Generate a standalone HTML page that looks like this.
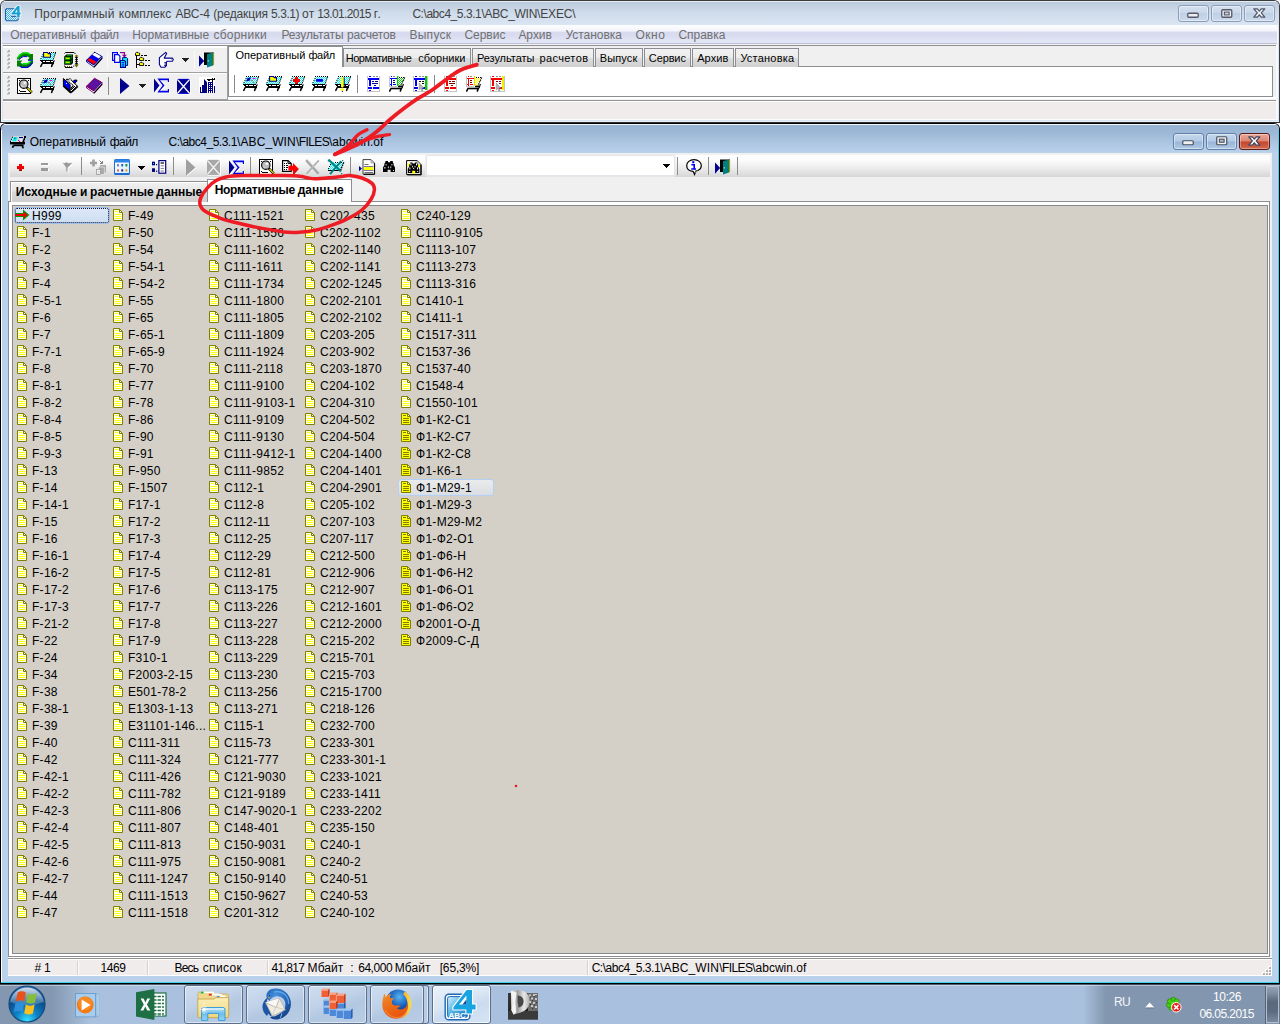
<!DOCTYPE html>
<html lang="ru"><head><meta charset="utf-8"><title>ABC-4</title>
<style>
html,body{margin:0;padding:0;}
body{width:1280px;height:1024px;overflow:hidden;background:#f4f7fb;font-family:"Liberation Sans",sans-serif;}
#root{position:relative;width:1280px;height:1024px;overflow:hidden;}
#root div{position:absolute;box-sizing:border-box;}
.t{position:absolute;white-space:pre;font-family:"Liberation Sans",sans-serif;}
.i{position:absolute;overflow:visible;}
.l{font-size:12px;line-height:16px;color:#000;letter-spacing:0.28px;}

</style></head>
<body>
<div id="root">
<div style="left:0px;top:0px;width:1280px;height:123px;background:#3b3b3b;border-radius:6px 6px 0 0;"></div>
<div style="left:1px;top:1px;width:1278px;height:121px;background:#dbe6f4;border-radius:5px 5px 0 0;"></div>
<div style="left:1px;top:1px;width:1278px;height:24px;background:linear-gradient(#e4ecf6 0,#e4ecf6 1px,#bccbdc 1px,#c0cfe0 4px,#cfdceb 12px,#d7e2f0 20px,#dae5f3 24px);border-radius:5px 5px 0 0;"></div>
<div style="left:1px;top:6px;width:1px;height:116px;background:#f2f6fb;"></div>
<div style="left:3px;top:25px;width:1px;height:95px;background:#fbfcfe;"></div>
<div style="left:1276px;top:25px;width:2px;height:95px;background:#f6f9fd;"></div>
<svg class="i" style="left:5px;top:5px" width="16" height="17" viewBox="0 0 16 17" >
<path d="M1.5 3.8H11.5V12.2H13.2V14.6L11.8 15.8H1.6L0.5 14.6V4.8Z" fill="url(#chkb)" stroke="#2060a8" stroke-width="1.1"/>
<path d="M6 11.2H11.5" stroke="#2060a8" stroke-width="1.4"/>
<path d="M6.4 8.6L12.6 0.8H14.6V7.4H15.6V9.6H14.6V12.4H12.2V9.6H6.4Z" fill="#ffffff" stroke="#ffffff" stroke-width="1.6" stroke-linejoin="round"/>
<path d="M6.4 8.6L12.6 0.8H14.6V7.4H15.6V9.6H14.6V12.4H12.2V9.6H6.4Z M12.2 7.4V4.4L9.8 7.4Z" fill="#14a0d0" fill-rule="evenodd"/>
</svg>
<span id="t1" class="t" style="left:34.2px;top:6px;font-size:12px;line-height:16px;color:#434343;letter-spacing:0.203px;">Программный</span>
<span id="t2" class="t" style="left:118.7px;top:6px;font-size:12px;line-height:16px;color:#434343;letter-spacing:0.116px;">комплекс</span>
<span id="t3" class="t" style="left:175.5px;top:6px;font-size:12px;line-height:16px;color:#434343;letter-spacing:-0.130px;">АВС-4</span>
<span id="t4" class="t" style="left:213.2px;top:6px;font-size:12px;line-height:16px;color:#434343;letter-spacing:-0.165px;">(редакция</span>
<span id="t5" class="t" style="left:271.1px;top:6px;font-size:12px;line-height:16px;color:#434343;letter-spacing:-0.466px;">5.3.1)</span>
<span id="t6" class="t" style="left:302.0px;top:6px;font-size:12px;line-height:16px;color:#434343;letter-spacing:0.244px;">от</span>
<span id="t7" class="t" style="left:317.3px;top:6px;font-size:12px;line-height:16px;color:#434343;letter-spacing:-0.656px;">13.01.2015</span>
<span id="t8" class="t" style="left:373.7px;top:6px;font-size:12px;line-height:16px;color:#434343;letter-spacing:0.875px;">г.</span>
<span id="t9" class="t" style="left:412.4px;top:6px;font-size:12px;line-height:16px;color:#434343;letter-spacing:-0.448px;">C:\abc4_5.3.1</span>
<span id="t10" class="t" style="left:481.4px;top:6px;font-size:12px;line-height:16px;color:#434343;letter-spacing:-0.301px;">\ABC_WIN</span>
<span id="t11" class="t" style="left:537.1px;top:6px;font-size:12px;line-height:16px;color:#434343;letter-spacing:-0.176px;">\EXEC\</span>
<div style="left:1178px;top:5px;width:31px;height:17px;border:1px solid #8d9cbb;border-radius:3px;background:linear-gradient(#d3dfee,#c9d8ea 50%,#bfd0e5 50%,#cbdaec);box-shadow:inset 0 0 0 1px rgba(255,255,255,.45);"></div>
<svg class="i" style="left:1187px;top:12px" width="13" height="6" viewBox="0 0 13 6" ><rect x="0.75" y="1.25" width="10.5" height="4" rx="1" fill="#eceef2" stroke="#55596a" stroke-width="1.3"/></svg>
<div style="left:1211px;top:5px;width:31px;height:17px;border:1px solid #8d9cbb;border-radius:3px;background:linear-gradient(#d3dfee,#c9d8ea 50%,#bfd0e5 50%,#cbdaec);box-shadow:inset 0 0 0 1px rgba(255,255,255,.45);"></div>
<svg class="i" style="left:1221px;top:9px" width="12" height="9" viewBox="0 0 12 9" ><rect x="0.75" y="0.75" width="10" height="7.5" rx="1" fill="#eceef2" stroke="#55596a" stroke-width="1.3"/><rect x="3.4" y="3.1" width="4.7" height="2.8" fill="#cfd8e6" stroke="#55596a" stroke-width="1.1"/></svg>
<div style="left:1244px;top:5px;width:31px;height:17px;border:1px solid #8d9cbb;border-radius:3px;background:linear-gradient(#d3dfee,#c9d8ea 50%,#bfd0e5 50%,#cbdaec);box-shadow:inset 0 0 0 1px rgba(255,255,255,.45);"></div>
<svg class="i" style="left:1253px;top:8px" width="13" height="11" viewBox="0 0 13 11" ><path d="M0.8 0.8H4.4L6.3 3.1L8.2 0.8H11.8L8.3 4.9L11.8 9.2H8.2L6.3 6.8L4.4 9.2H0.8L4.3 4.9Z" fill="#f0f1f4" stroke="#50556a" stroke-width="1.2" stroke-linejoin="round"/></svg>
<div style="left:2px;top:25px;width:1275px;height:18px;background:linear-gradient(#fdfdfe 0,#f3f5fb 6px,#d9dcef 7px,#d8dbef 10px,#e3e7f6 18px);"></div>
<div style="left:2px;top:43px;width:1275px;height:1px;background:#b9bed2;"></div>
<div style="left:2px;top:44px;width:1275px;height:1px;background:#f4f5f9;"></div>
<span id="t12" class="t" style="left:10.3px;top:27px;font-size:12px;line-height:16px;color:#707070;letter-spacing:-0.011px;">Оперативный</span>
<span id="t13" class="t" style="left:90.3px;top:27px;font-size:12px;line-height:16px;color:#707070;letter-spacing:-0.539px;">файл</span>
<span id="t14" class="t" style="left:132.2px;top:27px;font-size:12px;line-height:16px;color:#707070;letter-spacing:-0.021px;">Нормативные</span>
<span id="t15" class="t" style="left:213.4px;top:27px;font-size:12px;line-height:16px;color:#707070;letter-spacing:0.248px;">сборники</span>
<span id="t16" class="t" style="left:281.5px;top:27px;font-size:12px;line-height:16px;color:#707070;letter-spacing:-0.131px;">Результаты</span>
<span id="t17" class="t" style="left:347.1px;top:27px;font-size:12px;line-height:16px;color:#707070;letter-spacing:-0.207px;">расчетов</span>
<span id="t18" class="t" style="left:409.4px;top:27px;font-size:12px;line-height:16px;color:#707070;letter-spacing:0.292px;">Выпуск</span>
<span id="t19" class="t" style="left:464.4px;top:27px;font-size:12px;line-height:16px;color:#707070;letter-spacing:-0.016px;">Сервис</span>
<span id="t20" class="t" style="left:518.4px;top:27px;font-size:12px;line-height:16px;color:#707070;letter-spacing:-0.025px;">Архив</span>
<span id="t21" class="t" style="left:565.4px;top:27px;font-size:12px;line-height:16px;color:#707070;letter-spacing:-0.026px;">Установка</span>
<span id="t22" class="t" style="left:635.4px;top:27px;font-size:12px;line-height:16px;color:#707070;letter-spacing:0.527px;">Окно</span>
<span id="t23" class="t" style="left:678.4px;top:27px;font-size:12px;line-height:16px;color:#707070;letter-spacing:-0.011px;">Справка</span>
<div style="left:3px;top:45px;width:1273px;height:1px;background:#8f8f8f;"></div>
<div style="left:3px;top:46px;width:1273px;height:54px;background:#f0f0f0;"></div>
<div style="left:3px;top:46px;width:225px;height:1px;background:#ffffff;"></div>
<div style="left:3px;top:47px;width:225px;height:1px;background:#ffffff;"></div>
<div style="left:3px;top:72px;width:225px;height:1px;background:#a0a0a0;"></div>
<div style="left:3px;top:73px;width:225px;height:1px;background:#ffffff;"></div>
<div style="left:227px;top:46px;width:1px;height:53px;background:#a0a0a0;"></div>
<div style="left:228px;top:97px;width:1048px;height:2px;background:#ffffff;"></div>
<div style="left:3px;top:99px;width:225px;height:1px;background:#a0a0a0;"></div>
<div style="left:228px;top:99px;width:1048px;height:1px;background:#f2f2f2;"></div>
<div style="left:3px;top:100px;width:1273px;height:1px;background:#969696;"></div>
<div style="left:3px;top:101px;width:1273px;height:1px;background:#ffffff;"></div>
<div style="left:3px;top:102px;width:1273px;height:17px;background:#f1ecec;"></div>
<div style="left:3px;top:119px;width:1273px;height:1px;background:#fbfcfe;"></div>
<div style="left:1px;top:121px;width:1278px;height:1px;background:#e8eff8;"></div>
<div style="left:0px;top:122px;width:1280px;height:1px;background:#2f2f2f;"></div>
<div style="left:7px;top:51px;width:2px;height:2px;background:#c8c8c8;"></div>
<div style="left:8px;top:50px;width:2px;height:2px;background:#b4b4b4;"></div>
<div style="left:7px;top:55px;width:2px;height:2px;background:#c8c8c8;"></div>
<div style="left:8px;top:54px;width:2px;height:2px;background:#b4b4b4;"></div>
<div style="left:7px;top:59px;width:2px;height:2px;background:#c8c8c8;"></div>
<div style="left:8px;top:58px;width:2px;height:2px;background:#b4b4b4;"></div>
<div style="left:7px;top:63px;width:2px;height:2px;background:#c8c8c8;"></div>
<div style="left:8px;top:62px;width:2px;height:2px;background:#b4b4b4;"></div>
<div style="left:7px;top:67px;width:2px;height:2px;background:#c8c8c8;"></div>
<div style="left:8px;top:66px;width:2px;height:2px;background:#b4b4b4;"></div>
<div style="left:7px;top:77px;width:2px;height:2px;background:#c8c8c8;"></div>
<div style="left:8px;top:76px;width:2px;height:2px;background:#b4b4b4;"></div>
<div style="left:7px;top:81px;width:2px;height:2px;background:#c8c8c8;"></div>
<div style="left:8px;top:80px;width:2px;height:2px;background:#b4b4b4;"></div>
<div style="left:7px;top:85px;width:2px;height:2px;background:#c8c8c8;"></div>
<div style="left:8px;top:84px;width:2px;height:2px;background:#b4b4b4;"></div>
<div style="left:7px;top:89px;width:2px;height:2px;background:#c8c8c8;"></div>
<div style="left:8px;top:88px;width:2px;height:2px;background:#b4b4b4;"></div>
<div style="left:7px;top:93px;width:2px;height:2px;background:#c8c8c8;"></div>
<div style="left:8px;top:92px;width:2px;height:2px;background:#b4b4b4;"></div>
<div style="left:228px;top:66px;width:1045px;height:31px;background:#fff;border:1px solid #8c8e94;"></div>
<div style="left:343px;top:48px;width:128px;height:19px;border:1px solid #8c8e94;border-bottom:none;background:linear-gradient(#f2f2f2,#ebebeb 50%,#dddddd 50%,#d0d0d0);"></div>
<span id="t24" class="t" style="left:345.7px;top:51px;font-size:11px;line-height:15px;color:#000;letter-spacing:-0.459px;">Нормативные</span>
<span id="t25" class="t" style="left:418.2px;top:51px;font-size:11px;line-height:15px;color:#000;letter-spacing:-0.002px;">сборники</span>
<div style="left:472px;top:48px;width:122px;height:19px;border:1px solid #8c8e94;border-bottom:none;background:linear-gradient(#f2f2f2,#ebebeb 50%,#dddddd 50%,#d0d0d0);"></div>
<span id="t26" class="t" style="left:476.9px;top:51px;font-size:11px;line-height:15px;color:#000;letter-spacing:-0.044px;">Результаты</span>
<span id="t27" class="t" style="left:539.4px;top:51px;font-size:11px;line-height:15px;color:#000;letter-spacing:0.377px;">расчетов</span>
<div style="left:595px;top:48px;width:48px;height:19px;border:1px solid #8c8e94;border-bottom:none;background:linear-gradient(#f2f2f2,#ebebeb 50%,#dddddd 50%,#d0d0d0);"></div>
<span id="t28" class="t" style="left:599.7px;top:51px;font-size:11px;line-height:15px;color:#000;letter-spacing:0.134px;">Выпуск</span>
<div style="left:644px;top:48px;width:47px;height:19px;border:1px solid #8c8e94;border-bottom:none;background:linear-gradient(#f2f2f2,#ebebeb 50%,#dddddd 50%,#d0d0d0);"></div>
<span id="t29" class="t" style="left:648.8px;top:51px;font-size:11px;line-height:15px;color:#000;letter-spacing:-0.112px;">Сервис</span>
<div style="left:692px;top:48px;width:42px;height:19px;border:1px solid #8c8e94;border-bottom:none;background:linear-gradient(#f2f2f2,#ebebeb 50%,#dddddd 50%,#d0d0d0);"></div>
<span id="t30" class="t" style="left:697.2px;top:51px;font-size:11px;line-height:15px;color:#000;letter-spacing:0.073px;">Архив</span>
<div style="left:735px;top:48px;width:64px;height:19px;border:1px solid #8c8e94;border-bottom:none;background:linear-gradient(#f2f2f2,#ebebeb 50%,#dddddd 50%,#d0d0d0);"></div>
<span id="t31" class="t" style="left:740.4px;top:51px;font-size:11px;line-height:15px;color:#000;letter-spacing:0.222px;">Установка</span>
<div style="left:228px;top:46px;width:115px;height:21px;border:1px solid #8c8e94;border-bottom:none;background:#fff;"></div>
<span id="t32" class="t" style="left:235.4px;top:48px;font-size:11px;line-height:15px;color:#000;letter-spacing:0.020px;">Оперативный</span>
<span id="t33" class="t" style="left:308.4px;top:48px;font-size:11px;line-height:15px;color:#000;letter-spacing:-0.336px;">файл</span>
<svg class="i" width="0" height="0" style="left:0;top:0"><defs>
<pattern id="chk" width="2" height="2" patternUnits="userSpaceOnUse"><rect width="2" height="2" fill="#00ffff"/><rect width="1" height="1" fill="#fff"/><rect x="1" y="1" width="1" height="1" fill="#fff"/></pattern>
<pattern id="chkg" width="2" height="2" patternUnits="userSpaceOnUse"><rect width="2" height="2" fill="#00e000"/><rect width="1" height="1" fill="#fff"/><rect x="1" y="1" width="1" height="1" fill="#fff"/></pattern>
<pattern id="chky" width="2" height="2" patternUnits="userSpaceOnUse"><rect width="2" height="2" fill="#ffff00"/><rect width="1" height="1" fill="#fff"/><rect x="1" y="1" width="1" height="1" fill="#fff"/></pattern>
<pattern id="chkk" width="2" height="2" patternUnits="userSpaceOnUse"><rect width="2" height="2" fill="#000"/><rect width="1" height="1" fill="#fff"/><rect x="1" y="1" width="1" height="1" fill="#fff"/></pattern>
<pattern id="chkb" width="2" height="2" patternUnits="userSpaceOnUse"><rect width="2" height="2" fill="#38b0f0"/><rect width="1" height="1" fill="#e8f6ff"/><rect x="1" y="1" width="1" height="1" fill="#e8f6ff"/></pattern>
</defs></svg>
<svg class="i" style="left:17px;top:52px" width="16" height="16" viewBox="0 0 16 16" >
<path d="M0 7.5V5.5L2.5 2.5L5.5 0.5H11L13 2H16V8H10.5L12.5 6L10.5 4.2H6L3.5 5.8L2 7.5Z" fill="#008000"/>
<path d="M0.4 6.2L2.9 3L5.7 1.1H11L13.2 2.5" stroke="#00e800" stroke-width="1.3" fill="none"/>
<path d="M2 7.6L4 5.8L6.2 4.6H10.4" stroke="#0000e0" stroke-width="1" fill="none"/>
<path d="M11 8.3H16" stroke="#0000e0" stroke-width="1"/>
<g transform="rotate(180 8 8.25)">
<path d="M0 7.5V5.5L2.5 2.5L5.5 0.5H11L13 2H16V8H10.5L12.5 6L10.5 4.2H6L3.5 5.8L2 7.5Z" fill="#008000"/>
<path d="M0.4 6.2L2.9 3L5.7 1.1H11L13.2 2.5" stroke="#0000e0" stroke-width="1.2" fill="none"/>
<path d="M2.4 7.4L4.2 5.6L6.2 4.8H10.4" stroke="#00e800" stroke-width="1.2" fill="none"/>
</g>
</svg>
<svg class="i" style="left:40px;top:52px" width="16" height="16" viewBox="0 0 16 16" ><path d="M3.5 1H16L12.6 8H0Z" fill="url(#chk)"/><path d="M3 0.5H16" stroke="#000" stroke-width="1" stroke-dasharray="1 1"/><path d="M2.5 2.5h1M1.5 4.5h1M0.5 6.5h1" stroke="#000" stroke-width="1"/><path d="M15.6 0.6L12.9 8.2" stroke="#000" stroke-width="1.1" stroke-dasharray="1.2 0.8"/><path d="M14.4 8.4L12.6 13" stroke="#000" stroke-width="1.1" stroke-dasharray="1.2 0.8"/><g shape-rendering="crispEdges"><rect x="0" y="8" width="13" height="1" fill="#000"/><rect x="1" y="9" width="13" height="1" fill="#000"/><rect x="3" y="9" width="2" height="1" fill="#fff"/><rect x="6" y="9" width="4" height="1" fill="#fff"/><rect x="11" y="9" width="2" height="1" fill="#fff"/><rect x="2" y="10" width="12" height="2" fill="#000"/></g><path d="M2.2 11.5L0.8 14.4M12.6 11.5L11.6 14.4" stroke="#000" stroke-width="1.5" stroke-linecap="round"/><path d="M4 0.5H7.5L8.3 1.6H10.5V5.3H3.6V0.5Z" fill="#ffff00" stroke="#000090" stroke-width="1.1" stroke-linejoin="round"/></svg>
<svg class="i" style="left:64px;top:52px" width="16" height="16" viewBox="0 0 16 16" >
<path d="M0.5 1.5L1.5 0.5H10L11.5 2" stroke="#000" fill="none" stroke-width="1"/>
<path d="M2.4 2.4H9V11L7.4 12.8H0.2V4.6Z" fill="#000"/>
<path d="M2.6 3.5H7.8V7.4M7.8 8.4V10.6" stroke="#009000" stroke-width="1" fill="none"/>
<rect x="1" y="4.8" width="5.4" height="3" fill="#00a800"/><rect x="1.8" y="5.8" width="3.8" height="1" fill="#ffff00"/>
<rect x="1" y="8.8" width="5.4" height="3" fill="#00a800"/><rect x="1.8" y="9.8" width="3.8" height="1" fill="#ffff00"/>
<path d="M1 14.5H9" stroke="#707000" stroke-width="1" stroke-dasharray="1 1"/><path d="M1 15.5H8.5" stroke="#000" stroke-width="1"/>
<rect x="0" y="13.6" width="1" height="1" fill="#000"/><rect x="9.2" y="13.6" width="1" height="1" fill="#000"/>
<path d="M12.5 3.5V14" stroke="#000" stroke-width="1.2"/>
<path d="M11.2 5.5H13.8M11.2 7.5H13.8M11.2 9.5H13.8M11.2 11.5H13.8" stroke="#000" stroke-width="0.9"/>
<path d="M10.4 4.2L12.5 2.4L14.6 4.2L12.5 4.8Z" fill="#808000"/><path d="M10.4 12.4L12.5 12L14.6 12.4L12.5 15.4Z" fill="#606000"/>
</svg>
<svg class="i" style="left:86px;top:52px" width="17" height="16" viewBox="0 0 17 16" >
<path d="M0.5 8.2V9.8L7.8 14.9L16 6V4.4L7.8 12.8Z" fill="#fff" stroke="#000090" stroke-width="0.9"/>
<path d="M7.9 15.3L16.3 6.2" stroke="#000" stroke-width="1.1"/>
<path d="M0.5 8.2L8.5 0.3L15.6 4.2L7.8 12.8Z" fill="#0000f0" stroke="#000090" stroke-width="0.9"/>
<path d="M6.2 2.8L8.5 0.6L15 4.2L12.8 6.6Z" fill="#fff"/>
<path d="M1.2 8.2L3.6 5.9L10.2 9.8L7.8 12.3Z" fill="#ff0000"/>
<rect x="8" y="0" width="1" height="1" fill="#000"/>
</svg>
<svg class="i" style="left:112px;top:52px" width="16" height="16" viewBox="0 0 16 16" >
<rect x="0.6" y="0.6" width="4.8" height="7.8" fill="#fff" stroke="#0000f0" stroke-width="1.2"/>
<path d="M2.6 2.6H6.4L7.9 4.2V10.4H2.6Z" fill="#fff" stroke="#0000f0" stroke-width="1.2"/>
<path d="M8 0.6H13" stroke="#900090" stroke-width="1.2"/><path d="M12.4 0.6V4" stroke="#900090" stroke-width="1.2"/><path d="M9.8 2.8H15L12.4 5.4Z" fill="#900090"/>
<path d="M10.6 5.6H14.6L15.6 6.6V13.4H10.6Z" fill="#00f0f0" stroke="#000090" stroke-width="1"/>
<path d="M8.5 8.5H12.4L13.5 9.6V15.4H8.5Z" fill="#00f0f0" stroke="#000090" stroke-width="1.1"/>
<path d="M9.8 10.5H12.2M9.8 12.2H12.2M9.8 13.9H12.2" stroke="#0000e0" stroke-width="0.9"/>
</svg>
<svg class="i" style="left:135px;top:52px" width="16" height="16" viewBox="0 0 16 16" >
<g shape-rendering="crispEdges">
<rect x="1" y="3" width="1" height="13" fill="#000"/>
<rect x="2" y="7" width="3" height="1" fill="#000"/><rect x="2" y="12" width="3" height="1" fill="#000"/>
<rect x="6" y="3" width="2" height="1" fill="#000"/><rect x="9" y="3" width="3" height="1" fill="#000"/>
<rect x="10" y="8" width="2" height="1" fill="#000"/><rect x="13" y="8" width="2" height="1" fill="#000"/>
<rect x="10" y="13" width="2" height="1" fill="#000"/><rect x="13" y="13" width="2" height="1" fill="#000"/>
</g>
<path d="M0.5 3.5V1.2L1.5 0.4H3L3.8 1.2H4.6V3.5Z" fill="#ffff00" stroke="#000" stroke-width="0.9"/>
<path d="M4.5 8.5V6.2L5.5 5.4H7L7.8 6.2H8.6V8.5Z" fill="#ffff00" stroke="#000" stroke-width="0.9"/>
<path d="M4.5 13.5V11.2L5.5 10.4H7L7.8 11.2H8.6V13.5Z" fill="#ffff00" stroke="#000" stroke-width="0.9"/>
</svg>
<svg class="i" style="left:158px;top:52px" width="16" height="16" viewBox="0 0 16 16" >
<path d="M7.7 0.4L1.4 5.6V12.4L3 15.2H7L8.4 13.6V10.2L9 9.2H14.4L15.3 7.6L14.4 6.1H6.2L8.7 1.5Z" fill="#fff" stroke="#000090" stroke-width="1.1" stroke-linejoin="round"/>
<path d="M6.4 10.5H8.4M6.4 12H8.4M6.2 13.5H8" stroke="#000090" stroke-width="0.9"/>
<rect x="13" y="7" width="1.4" height="1.4" fill="#b0b0b0"/>
</svg>
<svg class="i" style="left:182px;top:58px" width="7" height="4" viewBox="0 0 7 4" ><g shape-rendering="crispEdges" fill="#202020"><rect x="0" y="0" width="7" height="1"/><rect x="1" y="1" width="5" height="1"/><rect x="2" y="2" width="3" height="1"/><rect x="3" y="3" width="1" height="1"/></g></svg>
<div style="left:194px;top:51px;width:1px;height:18px;background:#fafafa;"></div>
<div style="left:107px;top:51px;width:1px;height:18px;background:#fafafa;"></div>
<svg class="i" style="left:199px;top:52px" width="17" height="16" viewBox="0 0 17 16" ><path d="M0 3.6L5.2 9L0 14.4Z" fill="#000090"/><path d="M0 12.6V14.4L1.8 12.6Z" fill="#0000f0"/>
<path d="M5 0.5H15V13H5Z" fill="#000"/>
<path d="M8 2.2L14.2 0.6V13.4L8 15.4Z" fill="#008080"/>
<path d="M14.6 1V13" stroke="#c0a000" stroke-width="1"/>
<rect x="8.8" y="8" width="0.9" height="1.6" fill="#c0e0e0"/></svg>
<svg class="i" style="left:17px;top:78px" width="16" height="16" viewBox="0 0 16 16" ><rect x="0.5" y="0.5" width="13" height="15" fill="#fff" stroke="#000" stroke-width="1"/>
<path d="M3 13.5H9" stroke="#000" stroke-width="1"/><rect x="2" y="2" width="1" height="1" fill="#000"/><rect x="11" y="2" width="1" height="1" fill="#000"/><rect x="2" y="12" width="1" height="1" fill="#000"/>
<circle cx="6.8" cy="6.2" r="4.2" fill="#bcbcbc" stroke="#000" stroke-width="1.1"/>
<circle cx="7.8" cy="4.8" r="1.4" fill="#f6f6f6"/><path d="M4.4 7L6.2 8.8" stroke="#e8e8e8" stroke-width="0.9"/>
<path d="M9.8 9.4L14.8 14.6" stroke="#000" stroke-width="2.4"/><path d="M10.6 10L14.7 14.3" stroke="#f4e800" stroke-width="1.1"/></svg>
<svg class="i" style="left:40px;top:78px" width="16" height="16" viewBox="0 0 16 16" ><path d="M3.5 1H16L12.6 8H0Z" fill="url(#chk)"/><path d="M3 0.5H16" stroke="#000" stroke-width="1" stroke-dasharray="1 1"/><path d="M2.5 2.5h1M1.5 4.5h1M0.5 6.5h1" stroke="#000" stroke-width="1"/><path d="M15.6 0.6L12.9 8.2" stroke="#000" stroke-width="1.1" stroke-dasharray="1.2 0.8"/><path d="M14.4 8.4L12.6 13" stroke="#000" stroke-width="1.1" stroke-dasharray="1.2 0.8"/><g shape-rendering="crispEdges"><rect x="0" y="8" width="13" height="1" fill="#000"/><rect x="1" y="9" width="13" height="1" fill="#000"/><rect x="3" y="9" width="2" height="1" fill="#fff"/><rect x="6" y="9" width="4" height="1" fill="#fff"/><rect x="11" y="9" width="2" height="1" fill="#fff"/><rect x="2" y="10" width="12" height="2" fill="#000"/></g><path d="M2.2 11.5L0.8 14.4M12.6 11.5L11.6 14.4" stroke="#000" stroke-width="1.5" stroke-linecap="round"/><path d="M4.5 2L8 1.2L7 4.6L3 5.6Z" fill="#0000b0"/><path d="M9.5 2.5H12.5" stroke="#ff00ff" stroke-width="1"/><path d="M8.5 4L11.5 7.5" stroke="#f00000" stroke-width="1" stroke-dasharray="1.4 0.8"/></svg>
<svg class="i" style="left:63px;top:78px" width="16" height="16" viewBox="0 0 16 16" >
<path d="M3.2 1.3H5.5L6.5 0.3L14.9 8.5L8.1 14.8L7.1 13.1V6.6Z" fill="#fff"/>
<path d="M10.5 7.7L14.9 8.5L8.1 14.8V10Z" fill="url(#chkk)"/>
<path d="M3.2 1.3L10.5 7.7M6.5 0.3L14.9 8.5" stroke="#000" stroke-width="1.1" stroke-dasharray="1.3 0.6"/>
<path d="M3.2 1.3H5.6L6.4 2.2" stroke="#000" stroke-width="1" fill="none"/>
<path d="M10.5 7.7L8.1 10V12" stroke="#000" stroke-width="1.1" fill="none"/>
<path d="M14.9 8.5L8.1 14.8" stroke="#000" stroke-width="1.2"/>
<path d="M0.4 0.5L7.1 6.6V13.1L0.4 7.5Z" fill="#0000ff" stroke="#000" stroke-width="1"/>
<path d="M0.4 7.7L8 14.8" stroke="#000" stroke-width="1.9"/>
<path d="M10 3.5L11.3 2.1H13.8V3.3L11.4 5.4Z" fill="#0000ff" stroke="#000" stroke-width="1"/>
<rect x="3" y="5" width="1" height="1" fill="#fff"/>
</svg>
<svg class="i" style="left:86px;top:78px" width="17" height="16" viewBox="0 0 17 16" >
<path d="M0.5 8.2V9.8L7.8 14.9L16 6V4.4L7.8 12.8Z" fill="#fff" stroke="#700070" stroke-width="0.9"/>
<path d="M7.9 15.3L16.3 6.2" stroke="#000" stroke-width="1.1"/>
<path d="M0.5 8.2L8.5 0.3L15.6 4.2L7.8 12.8Z" fill="#800080" stroke="#600060" stroke-width="0.9"/>
<path d="M3.4 8.2L9.6 1.9M5.8 9.6L12 3.2M8.2 11L14.2 4.6" stroke="#2828d0" stroke-width="1.1"/>
</svg>
<div style="left:108px;top:77px;width:1px;height:18px;background:#8a8a8a;"></div>
<svg class="i" style="left:120px;top:78px" width="10" height="16" viewBox="0 0 10 16" ><path d="M0 0L9.5 8L0 16Z" fill="#000090"/></svg>
<svg class="i" style="left:139px;top:84px" width="7" height="4" viewBox="0 0 7 4" ><g shape-rendering="crispEdges" fill="#202020"><rect x="0" y="0" width="7" height="1"/><rect x="1" y="1" width="5" height="1"/><rect x="2" y="2" width="3" height="1"/><rect x="3" y="3" width="1" height="1"/></g></svg>
<svg class="i" style="left:154px;top:78px" width="16" height="16" viewBox="0 0 16 16" ><path d="M1 1.5L6.5 8.4L1 15.4Z" fill="#fff"/><path d="M4.4 1.4H16V4.8H14.8V3H7L11.6 8.2L6.8 13.6H14.8V11.8H16V15.4H4.4L9.6 8.3Z" fill="#fff"/><path d="M0 0.5L5.5 7.5L0 14.5Z" fill="#000090"/><path d="M3.4 0.6H15V4H13.8V2.2H6L10.6 7.4L5.8 12.8H13.8V11H15V14.6H3.4L8.6 7.5Z" fill="#0000e8"/></svg>
<svg class="i" style="left:177px;top:78px" width="14" height="17" viewBox="0 0 14 17" ><rect x="1" y="2" width="13" height="14.6" fill="#fff"/><path d="M1 1H12L13 2.2V14.6L12 15.8H1L0 14.6V2.2Z" fill="#000090"/><path d="M0.6 1.6L12.4 15.2M12.4 1.6L0.6 15.2" stroke="#fff" stroke-width="1.3"/><path d="M1.2 1.3H11.8M1.2 15.5H11.8" stroke="#0000e0" stroke-width="0.7"/></svg>
<svg class="i" style="left:199px;top:77px" width="17" height="17" viewBox="0 0 17 17" >
<g shape-rendering="crispEdges"><rect x="0" y="0" width="16" height="16" fill="#fff"/>
<rect x="1" y="10" width="1" height="6" fill="#000080"/><rect x="1" y="15" width="3" height="1" fill="#000080"/>
<rect x="3" y="8" width="2" height="8" fill="#000080"/>
<rect x="5" y="11" width="3" height="5" fill="#000080"/><rect x="6" y="7" width="2" height="4" fill="#000080"/>
<rect x="9" y="5" width="5" height="11" fill="#000080"/>
<rect x="10" y="6" width="1" height="1" fill="#fff"/><rect x="12" y="6" width="1" height="1" fill="#fff"/>
<rect x="10" y="8" width="1" height="1" fill="#fff"/><rect x="12" y="8" width="1" height="1" fill="#fff"/>
<rect x="10" y="10" width="1" height="1" fill="#fff"/><rect x="12" y="10" width="1" height="1" fill="#fff"/>
<rect x="10" y="12" width="1" height="1" fill="#fff"/><rect x="12" y="12" width="1" height="1" fill="#fff"/>
<rect x="10" y="14" width="1" height="1" fill="#fff"/><rect x="12" y="14" width="1" height="1" fill="#fff"/>
<rect x="10" y="15" width="1" height="1" fill="#fff"/><rect x="12" y="15" width="1" height="1" fill="#fff"/>
<rect x="15" y="9" width="1" height="7" fill="#000080"/>
<rect x="8" y="2" width="8" height="1" fill="#000"/><rect x="9" y="3" width="2" height="1" fill="#000"/><rect x="13" y="1" width="1" height="4" fill="#000"/><rect x="15" y="1" width="1" height="1" fill="#000"/></g>
<path d="M5 2L8 5.2V11H5Z" fill="#000080"/>
</svg>
<div style="left:234px;top:75px;width:1px;height:18px;background:#8a8a8a;"></div>
<svg class="i" style="left:243px;top:76px" width="16" height="16" viewBox="0 0 16 16" ><path d="M3.5 1H16L12.6 8H0Z" fill="url(#chk)"/><path d="M3 0.5H16" stroke="#000" stroke-width="1" stroke-dasharray="1 1"/><path d="M2.5 2.5h1M1.5 4.5h1M0.5 6.5h1" stroke="#000" stroke-width="1"/><path d="M15.6 0.6L12.9 8.2" stroke="#000" stroke-width="1.1" stroke-dasharray="1.2 0.8"/><path d="M14.4 8.4L12.6 13" stroke="#000" stroke-width="1.1" stroke-dasharray="1.2 0.8"/><g shape-rendering="crispEdges"><rect x="0" y="8" width="13" height="1" fill="#000"/><rect x="1" y="9" width="13" height="1" fill="#000"/><rect x="3" y="9" width="2" height="1" fill="#fff"/><rect x="6" y="9" width="4" height="1" fill="#fff"/><rect x="11" y="9" width="2" height="1" fill="#fff"/><rect x="2" y="10" width="12" height="2" fill="#000"/></g><path d="M2.2 11.5L0.8 14.4M12.6 11.5L11.6 14.4" stroke="#000" stroke-width="1.5" stroke-linecap="round"/><path d="M4.5 2L8 1.2L7 4.6L3 5.6Z" fill="#0000b0"/><path d="M9.5 2.5H12.5" stroke="#ff00ff" stroke-width="1"/><path d="M8.5 4L11.5 7.5" stroke="#f00000" stroke-width="1" stroke-dasharray="1.4 0.8"/></svg>
<svg class="i" style="left:266px;top:76px" width="16" height="16" viewBox="0 0 16 16" ><path d="M3.5 1H16L12.6 8H0Z" fill="url(#chk)"/><path d="M3 0.5H16" stroke="#000" stroke-width="1" stroke-dasharray="1 1"/><path d="M2.5 2.5h1M1.5 4.5h1M0.5 6.5h1" stroke="#000" stroke-width="1"/><path d="M15.6 0.6L12.9 8.2" stroke="#000" stroke-width="1.1" stroke-dasharray="1.2 0.8"/><path d="M14.4 8.4L12.6 13" stroke="#000" stroke-width="1.1" stroke-dasharray="1.2 0.8"/><g shape-rendering="crispEdges"><rect x="0" y="8" width="13" height="1" fill="#000"/><rect x="1" y="9" width="13" height="1" fill="#000"/><rect x="3" y="9" width="2" height="1" fill="#fff"/><rect x="6" y="9" width="4" height="1" fill="#fff"/><rect x="11" y="9" width="2" height="1" fill="#fff"/><rect x="2" y="10" width="12" height="2" fill="#000"/></g><path d="M2.2 11.5L0.8 14.4M12.6 11.5L11.6 14.4" stroke="#000" stroke-width="1.5" stroke-linecap="round"/><path d="M4 0.5H7.5L8.3 1.6H10.5V5.3H3.6V0.5Z" fill="#ffff00" stroke="#000090" stroke-width="1.1" stroke-linejoin="round"/></svg>
<svg class="i" style="left:289px;top:76px" width="16" height="16" viewBox="0 0 16 16" ><path d="M3.5 1H16L12.6 8H0Z" fill="url(#chk)"/><path d="M3 0.5H16" stroke="#000" stroke-width="1" stroke-dasharray="1 1"/><path d="M2.5 2.5h1M1.5 4.5h1M0.5 6.5h1" stroke="#000" stroke-width="1"/><path d="M15.6 0.6L12.9 8.2" stroke="#000" stroke-width="1.1" stroke-dasharray="1.2 0.8"/><path d="M14.4 8.4L12.6 13" stroke="#000" stroke-width="1.1" stroke-dasharray="1.2 0.8"/><g shape-rendering="crispEdges"><rect x="0" y="8" width="13" height="1" fill="#000"/><rect x="1" y="9" width="13" height="1" fill="#000"/><rect x="3" y="9" width="2" height="1" fill="#fff"/><rect x="6" y="9" width="4" height="1" fill="#fff"/><rect x="11" y="9" width="2" height="1" fill="#fff"/><rect x="2" y="10" width="12" height="2" fill="#000"/></g><path d="M2.2 11.5L0.8 14.4M12.6 11.5L11.6 14.4" stroke="#000" stroke-width="1.5" stroke-linecap="round"/><g shape-rendering="crispEdges"><rect x="6" y="1" width="3" height="7" fill="#ff0000"/><rect x="4" y="3" width="7" height="3" fill="#ff0000"/><rect x="6" y="7" width="3" height="1" fill="#c00000"/></g></svg>
<svg class="i" style="left:312px;top:76px" width="16" height="16" viewBox="0 0 16 16" ><path d="M3.5 1H16L12.6 8H0Z" fill="url(#chk)"/><path d="M3 0.5H16" stroke="#000" stroke-width="1" stroke-dasharray="1 1"/><path d="M2.5 2.5h1M1.5 4.5h1M0.5 6.5h1" stroke="#000" stroke-width="1"/><path d="M15.6 0.6L12.9 8.2" stroke="#000" stroke-width="1.1" stroke-dasharray="1.2 0.8"/><path d="M14.4 8.4L12.6 13" stroke="#000" stroke-width="1.1" stroke-dasharray="1.2 0.8"/><g shape-rendering="crispEdges"><rect x="0" y="8" width="13" height="1" fill="#000"/><rect x="1" y="9" width="13" height="1" fill="#000"/><rect x="3" y="9" width="2" height="1" fill="#fff"/><rect x="6" y="9" width="4" height="1" fill="#fff"/><rect x="11" y="9" width="2" height="1" fill="#fff"/><rect x="2" y="10" width="12" height="2" fill="#000"/></g><path d="M2.2 11.5L0.8 14.4M12.6 11.5L11.6 14.4" stroke="#000" stroke-width="1.5" stroke-linecap="round"/><rect x="4" y="3" width="7" height="2.7" rx="0.6" fill="#0000ff"/></svg>
<svg class="i" style="left:335px;top:76px" width="16" height="16" viewBox="0 0 16 16" ><path d="M3.5 1H16L12.6 8H0Z" fill="url(#chk)"/><path d="M3 0.5H16" stroke="#000" stroke-width="1" stroke-dasharray="1 1"/><path d="M2.5 2.5h1M1.5 4.5h1M0.5 6.5h1" stroke="#000" stroke-width="1"/><path d="M15.6 0.6L12.9 8.2" stroke="#000" stroke-width="1.1" stroke-dasharray="1.2 0.8"/><path d="M14.4 8.4L12.6 13" stroke="#000" stroke-width="1.1" stroke-dasharray="1.2 0.8"/><g shape-rendering="crispEdges"><rect x="0" y="8" width="13" height="1" fill="#000"/><rect x="1" y="9" width="13" height="1" fill="#000"/><rect x="3" y="9" width="2" height="1" fill="#fff"/><rect x="6" y="9" width="4" height="1" fill="#fff"/><rect x="11" y="9" width="2" height="1" fill="#fff"/><rect x="2" y="10" width="12" height="2" fill="#000"/></g><path d="M2.2 11.5L0.8 14.4M12.6 11.5L11.6 14.4" stroke="#000" stroke-width="1.5" stroke-linecap="round"/><rect x="8.4" y="1.4" width="1.3" height="9.4" fill="#000090"/><rect x="6" y="1" width="2.6" height="10.4" rx="0.8" fill="#ffff00"/><path d="M7.3 11.8L9.4 13.8L7.3 15.4L5.2 13.8Z" fill="#ffff00"/><rect x="6.9" y="15" width="1" height="1" fill="#000090"/></svg>
<div style="left:357px;top:75px;width:1px;height:18px;background:#8a8a8a;"></div>
<div style="left:434px;top:75px;width:1px;height:18px;background:#8a8a8a;"></div>
<svg class="i" style="left:367px;top:76px" width="13" height="16" viewBox="0 0 13 16" ><g shape-rendering="crispEdges"><rect x="0" y="0" width="13" height="16" fill="#c4c4c4"/><rect x="1" y="0" width="11" height="15" fill="#fff"/><rect x="2" y="0" width="2" height="1" fill="#0000f8"/><rect x="6" y="0" width="2" height="1" fill="#909090"/><rect x="9" y="0" width="2" height="1" fill="#909090"/><rect x="1" y="2" width="11" height="2" fill="#0000f8"/><rect x="2" y="4" width="2" height="6" fill="#0000f8"/><rect x="5" y="5" width="2" height="1" fill="#000090"/><rect x="8" y="5" width="3" height="1" fill="#000090"/><rect x="5" y="7" width="6" height="1" fill="#000090"/><rect x="7" y="9" width="2" height="1" fill="#000090"/><rect x="1" y="11" width="4" height="2" fill="#0000f8"/><rect x="6" y="11" width="6" height="2" fill="#0000f8"/><rect x="2" y="14" width="2" height="1" fill="#0000f8"/></g></svg>
<svg class="i" style="left:389px;top:76px" width="16" height="16" viewBox="0 0 16 16" >
<g shape-rendering="crispEdges"><rect x="0" y="0" width="8" height="11" fill="#c4c4c4"/><rect x="1" y="0" width="7" height="10" fill="#fff"/>
<rect x="2" y="0" width="1" height="1" fill="#0000f8"/><rect x="4" y="0" width="2" height="1" fill="#909090"/>
<rect x="1" y="2" width="7" height="1" fill="#0000f8"/><rect x="2" y="3" width="1" height="5" fill="#0000f8"/>
<rect x="4" y="4" width="2" height="1" fill="#000090"/><rect x="4" y="6" width="2" height="1" fill="#000090"/>
<rect x="1" y="8" width="2" height="1" fill="#0000f8"/><rect x="4" y="8" width="3" height="1" fill="#0000f8"/><rect x="2" y="9" width="1" height="1" fill="#0000f8"/></g>
<path d="M8 0.5V10H11L15.5 1.5H11L10 0.5Z" fill="url(#chkg)"/>
<path d="M8.5 0V10" stroke="#00d000" stroke-width="1"/>
<path d="M10 1.5H16" stroke="#000" stroke-width="1" stroke-dasharray="1 1"/>
<path d="M15.8 1.5L12 9.5" stroke="#000" stroke-width="1.1" stroke-dasharray="1.4 0.7"/>
<path d="M14.4 8L13 12.4" stroke="#000" stroke-width="1.1"/>
<path d="M9 10.5H13.5" stroke="#000" stroke-width="1.6"/>
<path d="M1.5 12.5H13" stroke="#000" stroke-width="1.6"/>
<path d="M1.6 13L0.8 15M12 13L11.4 15" stroke="#000" stroke-width="1.6" stroke-linecap="round"/></svg>
<svg class="i" style="left:413px;top:76px" width="15" height="16" viewBox="0 0 15 16" ><g shape-rendering="crispEdges"><rect x="0" y="0" width="15" height="16" fill="#c4c4c4"/><rect x="1" y="0" width="13" height="15" fill="#fff"/><rect x="2" y="0" width="2" height="1" fill="#0000f8"/><rect x="6" y="0" width="2" height="1" fill="#909090"/><rect x="9" y="0" width="2" height="1" fill="#909090"/><rect x="1" y="2" width="11" height="2" fill="#0000f8"/><rect x="2" y="4" width="2" height="6" fill="#0000f8"/><rect x="6" y="5" width="2" height="1" fill="#000000"/><rect x="9" y="5" width="2" height="1" fill="#000000"/><rect x="9" y="7" width="2" height="1" fill="#000000"/><rect x="1" y="11" width="4" height="2" fill="#0000f8"/><rect x="8" y="11" width="4" height="2" fill="#0000f8"/><rect x="2" y="14" width="2" height="1" fill="#0000f8"/><rect x="12" y="0" width="2" height="14" fill="#00d000"/></g><path d="M6.2 7L10.8 12H8.9L10 14.6L8.9 15.2L7.7 12.6L6.2 14Z" fill="#b4b4b4" stroke="#808080" stroke-width="0.5"/></svg>
<svg class="i" style="left:444px;top:76px" width="13" height="16" viewBox="0 0 13 16" ><g shape-rendering="crispEdges"><rect x="0" y="0" width="13" height="16" fill="#c4c4c4"/><rect x="1" y="0" width="11" height="15" fill="#fff"/><rect x="2" y="0" width="2" height="1" fill="#f80000"/><rect x="6" y="0" width="2" height="1" fill="#909090"/><rect x="9" y="0" width="2" height="1" fill="#909090"/><rect x="1" y="2" width="11" height="2" fill="#f80000"/><rect x="2" y="4" width="2" height="6" fill="#f80000"/><rect x="5" y="5" width="2" height="1" fill="#800000"/><rect x="8" y="5" width="3" height="1" fill="#800000"/><rect x="5" y="7" width="6" height="1" fill="#800000"/><rect x="7" y="9" width="2" height="1" fill="#800000"/><rect x="1" y="11" width="4" height="2" fill="#f80000"/><rect x="6" y="11" width="6" height="2" fill="#f80000"/><rect x="2" y="14" width="2" height="1" fill="#f80000"/></g></svg>
<svg class="i" style="left:466px;top:76px" width="16" height="16" viewBox="0 0 16 16" >
<g shape-rendering="crispEdges"><rect x="0" y="0" width="8" height="11" fill="#c4c4c4"/><rect x="1" y="0" width="7" height="10" fill="#fff"/>
<rect x="2" y="0" width="1" height="1" fill="#f80000"/><rect x="4" y="0" width="2" height="1" fill="#909090"/>
<rect x="1" y="2" width="7" height="1" fill="#f80000"/><rect x="2" y="3" width="1" height="5" fill="#f80000"/>
<rect x="4" y="4" width="2" height="1" fill="#800000"/><rect x="4" y="6" width="2" height="1" fill="#800000"/>
<rect x="1" y="8" width="2" height="1" fill="#f80000"/><rect x="4" y="8" width="3" height="1" fill="#f80000"/><rect x="2" y="9" width="1" height="1" fill="#f80000"/></g>
<path d="M8 0.5V10H11L15.5 1.5H11L10 0.5Z" fill="url(#chky)"/>
<path d="M8.5 0V10" stroke="#e8e000" stroke-width="1"/>
<path d="M10 1.5H16" stroke="#000" stroke-width="1" stroke-dasharray="1 1"/>
<path d="M15.8 1.5L12 9.5" stroke="#000" stroke-width="1.1" stroke-dasharray="1.4 0.7"/>
<path d="M14.4 8L13 12.4" stroke="#000" stroke-width="1.1"/>
<path d="M9 10.5H13.5" stroke="#000" stroke-width="1.6"/>
<path d="M1.5 12.5H13" stroke="#000" stroke-width="1.6"/>
<path d="M1.6 13L0.8 15M12 13L11.4 15" stroke="#000" stroke-width="1.6" stroke-linecap="round"/></svg>
<svg class="i" style="left:490px;top:76px" width="15" height="16" viewBox="0 0 15 16" ><g shape-rendering="crispEdges"><rect x="0" y="0" width="15" height="16" fill="#c4c4c4"/><rect x="1" y="0" width="13" height="15" fill="#fff"/><rect x="2" y="0" width="2" height="1" fill="#f80000"/><rect x="6" y="0" width="2" height="1" fill="#909090"/><rect x="9" y="0" width="2" height="1" fill="#909090"/><rect x="1" y="2" width="11" height="2" fill="#f80000"/><rect x="2" y="4" width="2" height="6" fill="#f80000"/><rect x="6" y="5" width="2" height="1" fill="#800000"/><rect x="9" y="5" width="2" height="1" fill="#800000"/><rect x="9" y="7" width="2" height="1" fill="#800000"/><rect x="1" y="11" width="4" height="2" fill="#f80000"/><rect x="8" y="11" width="4" height="2" fill="#f80000"/><rect x="2" y="14" width="2" height="1" fill="#f80000"/><rect x="12" y="0" width="2" height="14" fill="#f0f000"/></g><path d="M6.2 7L10.8 12H8.9L10 14.6L8.9 15.2L7.7 12.6L6.2 14Z" fill="#b4b4b4" stroke="#808080" stroke-width="0.5"/></svg>
<div style="left:0px;top:123px;width:1280px;height:861px;background:#000;border-radius:6px 6px 0 0;"></div>
<div style="left:1px;top:124px;width:1278px;height:859px;background:#b9d1ea;border-radius:5px 5px 0 0;"></div>
<div style="left:1px;top:124px;width:1278px;height:29px;background:linear-gradient(#f4f8fc 0,#f4f8fc 1px,#98b3d3 1px,#9db8d7 30%,#b1c9e4 75%,#b9d1ea 100%);border-radius:5px 5px 0 0;"></div>
<div style="left:1px;top:982px;width:1278px;height:1px;background:#3fd4ee;"></div>
<div style="left:1278px;top:130px;width:1px;height:853px;background:#3fd4ee;"></div>
<div style="left:0px;top:983px;width:1280px;height:1px;background:#000;"></div>
<div style="left:1px;top:130px;width:1px;height:852px;background:#fbfdff;"></div>
<svg class="i" style="left:10px;top:136px" width="17" height="13" viewBox="0 0 17 13" >
<path d="M3 0.3H14.4L12.4 6.2H0.8Z" fill="#dcdcdc"/>
<path d="M4 1H7.6L7 3L6.2 5.2H2.2L3 3Z" fill="#00f0f0"/><rect x="4" y="1.8" width="1.8" height="0.9" fill="#007070"/>
<rect x="9" y="1" width="4" height="1.1" fill="#000090"/>
<rect x="10.2" y="2.8" width="1.4" height="1.4" fill="#fff"/>
<rect x="8" y="3.8" width="1.1" height="1.1" fill="#a000a0"/><rect x="9.1" y="4.9" width="1.1" height="1.1" fill="#a000a0"/>
<g fill="#000"><rect x="2" y="0.8" width="1" height="1"/><rect x="1" y="2.8" width="1" height="1"/><rect x="0" y="4.8" width="1" height="1.4"/>
<path d="M14 0H16V2H15V4H14.4V6H12.2L13.2 3.6L14 2Z"/>
<rect x="0" y="6" width="15" height="2.4"/><rect x="3.4" y="8.4" width="10.2" height="1.8"/>
<path d="M2.2 9.4H4.4L3.6 11.8H1.8Z"/><path d="M11.6 10H13.2L14 12.2H12.2Z"/></g>
</svg>
<span id="t34" class="t" style="left:29.7px;top:134px;font-size:12px;line-height:16px;color:#000;letter-spacing:0.007px;">Оперативный</span>
<span id="t35" class="t" style="left:109.8px;top:134px;font-size:12px;line-height:16px;color:#000;letter-spacing:-0.589px;">файл</span>
<span id="t36" class="t" style="left:168.5px;top:134px;font-size:12px;line-height:16px;color:#000;letter-spacing:-0.486px;">C:\abc4_5.3.1</span>
<span id="t37" class="t" style="left:237.0px;top:134px;font-size:12px;line-height:16px;color:#000;letter-spacing:0.098px;">\ABC_WIN</span>
<span id="t38" class="t" style="left:296.0px;top:134px;font-size:12px;line-height:16px;color:#000;letter-spacing:-0.597px;">\FILES</span>
<span id="t39" class="t" style="left:329.0px;top:134px;font-size:12px;line-height:16px;color:#000;letter-spacing:0.036px;">\abcwin.of</span>
<div style="left:1173px;top:133px;width:31px;height:17px;border:1px solid #5f7ea8;border-radius:3px;background:linear-gradient(#c3d6ec,#b4cbe6 48%,#98b6d8 52%,#b0c9e5);box-shadow:inset 0 0 0 1px rgba(255,255,255,.45);"></div>
<svg class="i" style="left:1182px;top:140px" width="13" height="6" viewBox="0 0 13 6" ><rect x="0.75" y="0.75" width="10.5" height="4" rx="1" fill="#f0f0f0" stroke="#4a5060" stroke-width="1.2"/></svg>
<div style="left:1206px;top:133px;width:31px;height:17px;border:1px solid #5f7ea8;border-radius:3px;background:linear-gradient(#c3d6ec,#b4cbe6 48%,#98b6d8 52%,#b0c9e5);box-shadow:inset 0 0 0 1px rgba(255,255,255,.45);"></div>
<svg class="i" style="left:1216px;top:136px" width="12" height="10" viewBox="0 0 12 10" ><rect x="0.75" y="0.75" width="10" height="8" rx="1" fill="#f0f0f0" stroke="#4a5060" stroke-width="1.2"/><rect x="3.4" y="3.2" width="4.7" height="3" fill="#a8c0dc" stroke="#4a5060" stroke-width="1.1"/></svg>
<div style="left:1239px;top:133px;width:31px;height:17px;border:1px solid #5a1a18;border-radius:3px;background:linear-gradient(#e9a99b,#dc8370 48%,#c4452c 52%,#cf6a50);box-shadow:inset 0 0 0 1px rgba(255,255,255,.35);"></div>
<svg class="i" style="left:1248px;top:136px" width="13" height="11" viewBox="0 0 13 11" ><path d="M0.8 0.8H4.4L6.3 3.1L8.2 0.8H11.8L8.3 4.9L11.8 9.2H8.2L6.3 6.8L4.4 9.2H0.8L4.3 4.9Z" fill="#f6f6f6" stroke="#43445a" stroke-width="1.2" stroke-linejoin="round"/></svg>
<div style="left:8px;top:153px;width:1264px;height:823px;background:#f0f0f0;"></div>
<div style="left:10px;top:155px;width:1260px;height:22px;background:linear-gradient(#ffffff 0%,#fbfbfb 25%,#e6e6e6 72%,#d6d6d6 100%);"></div>
<div style="left:8px;top:201px;width:1262px;height:756px;background:#fff;border:1px solid #8c8e94;"></div>
<div style="left:12px;top:205px;width:1256px;height:749px;background:#d4d0c8;border:1px solid #85888f;"></div>
<div style="left:10px;top:181px;width:198px;height:21px;border:1px solid #8c8e94;border-bottom:none;background:linear-gradient(#ffffff 0,#ffffff 1px,#f0f0f0 1px,#e6e6e6 9px,#d9d9d9 10px,#cecece 20px);box-shadow:inset 1px 0 0 #fff;"></div>
<span id="t40" class="t" style="left:15.7px;top:184px;font-size:12px;line-height:16px;color:#000;font-weight:bold;letter-spacing:0.102px;">Исходные</span>
<span id="t41" class="t" style="left:79.9px;top:184px;font-size:12px;line-height:16px;color:#000;font-weight:bold;letter-spacing:1.018px;">и</span>
<span id="t42" class="t" style="left:90.1px;top:184px;font-size:12px;line-height:16px;color:#000;font-weight:bold;letter-spacing:-0.033px;">расчетные</span>
<span id="t43" class="t" style="left:156.2px;top:184px;font-size:12px;line-height:16px;color:#000;font-weight:bold;letter-spacing:0.079px;">данные</span>
<div style="left:207px;top:179px;width:145px;height:23px;border:1px solid #8c8e94;border-bottom:none;background:#fff;"></div>
<span id="t44" class="t" style="left:214.7px;top:182px;font-size:12px;line-height:16px;color:#000;font-weight:bold;letter-spacing:-0.288px;">Нормативные</span>
<span id="t45" class="t" style="left:297.7px;top:182px;font-size:12px;line-height:16px;color:#000;font-weight:bold;letter-spacing:0.047px;">данные</span>
<div style="left:8px;top:957px;width:1264px;height:1px;background:#ffffff;"></div>
<div style="left:8px;top:958px;width:1264px;height:1px;background:#929292;"></div>
<div style="left:8px;top:959px;width:1264px;height:1px;background:#ffffff;"></div>
<div style="left:8px;top:960px;width:1263px;height:15px;background:#f1ecec;"></div>
<div style="left:8px;top:975px;width:1264px;height:1px;background:#ffffff;"></div>
<div style="left:1271px;top:959px;width:1px;height:17px;background:#ffffff;"></div>
<div style="left:77px;top:961px;width:1px;height:14px;background:#d4d1d1;"></div>
<div style="left:78px;top:961px;width:1px;height:14px;background:#fcfbfb;"></div>
<div style="left:147px;top:961px;width:1px;height:14px;background:#d4d1d1;"></div>
<div style="left:148px;top:961px;width:1px;height:14px;background:#fcfbfb;"></div>
<div style="left:267px;top:961px;width:1px;height:14px;background:#d4d1d1;"></div>
<div style="left:268px;top:961px;width:1px;height:14px;background:#fcfbfb;"></div>
<div style="left:587px;top:961px;width:1px;height:14px;background:#d4d1d1;"></div>
<div style="left:588px;top:961px;width:1px;height:14px;background:#fcfbfb;"></div>
<span id="t46" class="t" style="left:34.4px;top:960px;font-size:12px;line-height:16px;color:#000;letter-spacing:-0.229px;"># 1</span>
<span id="t47" class="t" style="left:100.4px;top:960px;font-size:12px;line-height:16px;color:#000;letter-spacing:-0.426px;">1469</span>
<span id="t48" class="t" style="left:174.6px;top:960px;font-size:12px;line-height:16px;color:#000;letter-spacing:-0.832px;">Весь</span>
<span id="t49" class="t" style="left:202.7px;top:960px;font-size:12px;line-height:16px;color:#000;letter-spacing:0.372px;">список</span>
<span id="t50" class="t" style="left:271.6px;top:960px;font-size:12px;line-height:16px;color:#000;letter-spacing:-0.653px;">41,817</span>
<span id="t51" class="t" style="left:307.6px;top:960px;font-size:12px;line-height:16px;color:#000;letter-spacing:0.067px;">Мбайт</span>
<span id="t52" class="t" style="left:350.3px;top:960px;font-size:12px;line-height:16px;color:#000;letter-spacing:-0.935px;">:</span>
<span id="t53" class="t" style="left:358.2px;top:960px;font-size:12px;line-height:16px;color:#000;letter-spacing:-0.468px;">64,000</span>
<span id="t54" class="t" style="left:394.7px;top:960px;font-size:12px;line-height:16px;color:#000;letter-spacing:0.085px;">Мбайт</span>
<span id="t55" class="t" style="left:439.7px;top:960px;font-size:12px;line-height:16px;color:#000;letter-spacing:-0.157px;">[65,3%]</span>
<span id="t56" class="t" style="left:591.7px;top:960px;font-size:12px;line-height:16px;color:#000;letter-spacing:-0.486px;">C:\abc4_5.3.1</span>
<span id="t57" class="t" style="left:660.2px;top:960px;font-size:12px;line-height:16px;color:#000;letter-spacing:0.098px;">\ABC_WIN</span>
<span id="t58" class="t" style="left:719.2px;top:960px;font-size:12px;line-height:16px;color:#000;letter-spacing:-0.597px;">\FILES</span>
<span id="t59" class="t" style="left:752.2px;top:960px;font-size:12px;line-height:16px;color:#000;letter-spacing:0.017px;">\abcwin.of</span>
<div style="left:1268px;top:966px;width:2px;height:2px;background:#ffffff;"></div>
<div style="left:1269px;top:967px;width:2px;height:2px;background:#b4b0b0;"></div>
<div style="left:1265px;top:969px;width:2px;height:2px;background:#ffffff;"></div>
<div style="left:1266px;top:970px;width:2px;height:2px;background:#b4b0b0;"></div>
<div style="left:1268px;top:969px;width:2px;height:2px;background:#ffffff;"></div>
<div style="left:1269px;top:970px;width:2px;height:2px;background:#b4b0b0;"></div>
<div style="left:1262px;top:972px;width:2px;height:2px;background:#ffffff;"></div>
<div style="left:1263px;top:973px;width:2px;height:2px;background:#b4b0b0;"></div>
<div style="left:1265px;top:972px;width:2px;height:2px;background:#ffffff;"></div>
<div style="left:1266px;top:973px;width:2px;height:2px;background:#b4b0b0;"></div>
<div style="left:1268px;top:972px;width:2px;height:2px;background:#ffffff;"></div>
<div style="left:1269px;top:973px;width:2px;height:2px;background:#b4b0b0;"></div>
<svg class="i" style="left:17px;top:164px" width="7" height="7" viewBox="0 0 7 7" ><g shape-rendering="crispEdges"><rect x="2" y="0" width="3" height="7" fill="#f00000"/><rect x="0" y="2" width="7" height="3" fill="#f00000"/><rect x="2" y="6" width="3" height="1" fill="#b00000"/><rect x="0" y="4" width="2" height="1" fill="#c80000"/><rect x="5" y="4" width="2" height="1" fill="#c80000"/></g></svg>
<svg class="i" style="left:41px;top:163px" width="9" height="9" viewBox="0 0 9 9" ><g shape-rendering="crispEdges"><rect x="1" y="1" width="7" height="2" fill="#fff"/><rect x="1" y="6" width="7" height="2" fill="#fff"/><rect x="0" y="0" width="7" height="2" fill="#9a9a9a"/><rect x="0" y="5" width="7" height="3" fill="#9a9a9a"/></g></svg>
<svg class="i" style="left:62px;top:162px" width="12" height="12" viewBox="0 0 12 12" ><path d="M1.4 1L11.4 1.6L6.4 6.4L6.6 11.4L5 9.4V6.4Z" fill="#fff"/><path d="M0.4 0.2L2.2 1.2L4.4 0.2L6.4 1.2L10.4 0.8L5.6 5.8L5.4 10.6L4.2 8.6V5.6Z" fill="#9a9a9a"/></svg>
<div style="left:81px;top:157px;width:1px;height:18px;background:#8c8c8c;"></div>
<svg class="i" style="left:90px;top:159px" width="17" height="16" viewBox="0 0 17 16" >
<path d="M3.5 0.5V7.5M0 4H7" stroke="#a0a0a0" stroke-width="2.6"/>
<path d="M9.5 1.5L12.5 4.5M12.5 4.5V2M12.5 4.5H10" stroke="#808080" stroke-width="1" fill="none"/>
<rect x="10" y="6" width="6" height="7.5" fill="#a8a8a8"/>
<rect x="8.2" y="8" width="6" height="7.5" fill="#a8a8a8" stroke="#f0f0f0" stroke-width="0.6"/>
<rect x="6.5" y="10.6" width="4" height="5" fill="#fff" stroke="#909090" stroke-width="0.7"/>
<path d="M7.5 12.3H9.5M7.5 14H9.5" stroke="#909090" stroke-width="0.6"/>
</svg>
<svg class="i" style="left:114px;top:159px" width="16" height="16" viewBox="0 0 16 16" >
<defs><linearGradient id="calg" x1="0" y1="0" x2="1" y2="1"><stop offset="0" stop-color="#fff"/><stop offset="1" stop-color="#d6e8fa"/></linearGradient></defs>
<rect x="0.5" y="0.5" width="15" height="15" rx="0.8" fill="url(#calg)" stroke="#1c6cd8" stroke-width="1"/>
<path d="M0.5 1.2Q0.5 0.5 1.2 0.5H14.8Q15.5 0.5 15.5 1.2V3.4H0.5Z" fill="#2f84e8"/>
<path d="M0.5 14.8H15.5" stroke="#1c6cd8" stroke-width="1.6"/>
<rect x="3" y="5" width="2" height="2.4" rx="0.6" fill="#7c78c8"/><rect x="7.2" y="5" width="2" height="2.4" rx="0.6" fill="#2060d8"/><rect x="11.4" y="5" width="2" height="2.4" rx="0.6" fill="#189030"/>
<rect x="3" y="10.2" width="2" height="2.4" rx="0.6" fill="#f06030"/><rect x="7.2" y="10.2" width="2" height="2.4" rx="0.6" fill="#182890"/><rect x="11.4" y="10.2" width="2" height="2.4" rx="0.6" fill="#e8a018"/>
</svg>
<svg class="i" style="left:138px;top:166px" width="7" height="4" viewBox="0 0 7 4" ><g shape-rendering="crispEdges" fill="#000"><rect x="0" y="0" width="7" height="1"/><rect x="1" y="1" width="5" height="1"/><rect x="2" y="2" width="3" height="1"/><rect x="3" y="3" width="1" height="1"/></g></svg>
<svg class="i" style="left:152px;top:160px" width="15" height="14" viewBox="0 0 15 14" >
<rect x="6.9" y="0.6" width="6.8" height="12.6" fill="#fff" stroke="#000080" stroke-width="1.2"/>
<path d="M8.6 3H12" stroke="#000" stroke-width="1.2"/><path d="M8.6 5.8H12M8.6 8.4H12M8.6 11H12" stroke="#707070" stroke-width="0.9"/>
<rect x="0.5" y="2.2" width="2" height="2.6" fill="#00e0f0" stroke="#000080" stroke-width="1"/><rect x="0.5" y="8.8" width="2" height="2.6" fill="#00e0f0" stroke="#000080" stroke-width="1"/>
<rect x="4" y="4" width="1.2" height="1.2" fill="#000080"/><rect x="4" y="10.6" width="1.2" height="1.2" fill="#000080"/>
</svg>
<div style="left:173px;top:157px;width:1px;height:18px;background:#8c8c8c;"></div>
<svg class="i" style="left:186px;top:159px" width="11" height="18" viewBox="0 0 11 18" ><path d="M1 1L10.5 9L1 17Z" fill="#fff"/><path d="M0 0L9.5 8.4L0 16.8Z" fill="#a0a0a0"/></svg>
<svg class="i" style="left:207px;top:159px" width="14" height="17" viewBox="0 0 14 17" ><rect x="1" y="2" width="13" height="14.6" fill="#fff"/><path d="M1 1H12L13 2.2V14.6L12 15.8H1L0 14.6V2.2Z" fill="#a8a8a8"/><path d="M0.6 1.6L12.4 15.2M12.4 1.6L0.6 15.2" stroke="#f4f4f4" stroke-width="1.3"/><path d="M1.2 1.3H11.8M1.2 15.5H11.8" stroke="#a8a8a8" stroke-width="0.7"/></svg>
<svg class="i" style="left:229px;top:160px" width="17" height="17" viewBox="0 0 17 17" ><path d="M1 1.5L6.5 8.4L1 15.4Z" fill="#fff"/><path d="M4.4 1.4H16V4.8H14.8V3H7L11.6 8.2L6.8 13.6H14.8V11.8H16V15.4H4.4L9.6 8.3Z" fill="#fff"/><path d="M0 0.5L5.5 7.5L0 14.5Z" fill="#000090"/><path d="M3.4 0.6H15V4H13.8V2.2H6L10.6 7.4L5.8 12.8H13.8V11H15V14.6H3.4L8.6 7.5Z" fill="#0000e8"/></svg>
<div style="left:250px;top:157px;width:1px;height:18px;background:#8c8c8c;"></div>
<svg class="i" style="left:259px;top:159px" width="16" height="16" viewBox="0 0 16 16" ><rect x="0.5" y="0.5" width="13" height="15" fill="#fff" stroke="#000" stroke-width="1"/>
<path d="M3 13.5H9" stroke="#000" stroke-width="1"/><rect x="2" y="2" width="1" height="1" fill="#000"/><rect x="11" y="2" width="1" height="1" fill="#000"/><rect x="2" y="12" width="1" height="1" fill="#000"/>
<circle cx="6.8" cy="6.2" r="4.2" fill="#bcbcbc" stroke="#000" stroke-width="1.1"/>
<circle cx="7.8" cy="4.8" r="1.4" fill="#f6f6f6"/><path d="M4.4 7L6.2 8.8" stroke="#e8e8e8" stroke-width="0.9"/>
<path d="M9.8 9.4L14.8 14.6" stroke="#000" stroke-width="2.4"/><path d="M10.6 10L14.7 14.3" stroke="#f4e800" stroke-width="1.1"/></svg>
<svg class="i" style="left:282px;top:159px" width="17" height="17" viewBox="0 0 17 17" >
<path d="M0.6 1.6H6L9.2 4.6V12.4H0.6Z" fill="#fff" stroke="#000" stroke-width="1.2"/>
<path d="M6 1.6V4.6H9.2" fill="none" stroke="#000" stroke-width="1"/>
<g shape-rendering="crispEdges"><rect x="2" y="4" width="1" height="1" fill="#000"/><rect x="4" y="4" width="1" height="1" fill="#000"/><rect x="2" y="6" width="1" height="1" fill="#000"/><rect x="4" y="6" width="2" height="1" fill="#000"/><rect x="2" y="8" width="1" height="1" fill="#000"/><rect x="4" y="8" width="2" height="1" fill="#000"/><rect x="2" y="10" width="1" height="1" fill="#000"/><rect x="4" y="10" width="1" height="1" fill="#000"/></g>
<path d="M6.4 6.8H11V4L16.6 9.8L11 16V11.4H6.4Z" fill="#ff0000"/>
<path d="M11 16L16.6 9.8" stroke="#700000" stroke-width="0.7"/>
</svg>
<svg class="i" style="left:305px;top:159px" width="15" height="16" viewBox="0 0 15 16" ><path d="M1.2 1.2L13.6 14.6" stroke="#a4a4a4" stroke-width="2.6"/><path d="M13.8 1.4L1.6 14.8" stroke="#b0b0b0" stroke-width="1.7"/><path d="M2.4 1L14.4 14" stroke="#f4f4f4" stroke-width="0.6" opacity=".7"/></svg>
<svg class="i" style="left:327px;top:159px" width="18" height="17" viewBox="0 0 18 17" >
<path d="M4 3H17L13.5 11H1Z" fill="url(#chk)"/>
<g fill="#000"><rect x="8" y="3" width="1" height="1"/><rect x="10" y="3" width="1" height="1"/><rect x="14" y="3" width="1" height="1"/>
<rect x="3" y="5" width="1" height="1"/><rect x="2" y="7" width="1" height="1"/><rect x="1" y="9" width="1" height="1"/></g>
<path d="M16.8 3.2L13.4 11.6" stroke="#000" stroke-width="1.4" stroke-dasharray="1.7 0.7"/>
<path d="M1 11.5H13.4" stroke="#000" stroke-width="1"/>
<path d="M1.6 0.8L14 12.6" stroke="#008080" stroke-width="2.1"/><path d="M0.8 0.6H3.2V2.4H0.8Z" fill="#008080"/>
<path d="M14.2 2.2L3 15.2" stroke="#008080" stroke-width="1.9"/>
<rect x="15" y="1" width="1.2" height="1.2" fill="#008080"/><rect x="14" y="14" width="1.2" height="1.2" fill="#008080"/>
</svg>
<div style="left:350px;top:157px;width:1px;height:18px;background:#8c8c8c;"></div>
<svg class="i" style="left:359px;top:159px" width="17" height="16" viewBox="0 0 17 16" >
<path d="M0 7L3 9.6L0 12.2Z" fill="#000090"/>
<path d="M4 0.6H12L15.4 4V15H4Z" fill="#fff" stroke="#404040" stroke-width="1"/>
<path d="M15.6 4.4V15.4H4.6" fill="none" stroke="#000" stroke-width="1"/>
<path d="M12 0.8V4H15.2Z" fill="#d8d8d8" stroke="#808080" stroke-width="0.6"/>
<path d="M5.5 5.5H9.5" stroke="#707070" stroke-width="1"/>
<rect x="5" y="7.4" width="9.4" height="4" fill="#ffff00"/>
<path d="M5 7.5H14.4M5 11.5H14.4" stroke="#6868a8" stroke-width="0.9"/>
<path d="M5.5 13.5H14" stroke="#707070" stroke-width="1"/>
</svg>
<svg class="i" style="left:383px;top:161px" width="12" height="11" viewBox="0 0 12 11" ><path d="M2.4 0H5V1.2H7.2V0H9.8V1.2L10.6 2.6V4L12 6.6V11H7.6V8.8H4.6V11H0V6.6L1.4 4V2.6L2.4 1.2Z" fill="#000"/>
<rect x="4.8" y="3" width="2.6" height="5" fill="#000"/>
<g fill="#fff"><rect x="2.6" y="3.2" width="1" height="1.2"/><rect x="8.4" y="3.2" width="1" height="1.2"/><rect x="1.4" y="6" width="1" height="1.6"/><rect x="7.4" y="5.4" width="0.8" height="1.8"/><rect x="10" y="9" width="0.9" height="1"/><rect x="4.9" y="5.4" width="0.8" height="1.8"/></g></svg>
<svg class="i" style="left:406px;top:159px" width="16" height="17" viewBox="0 0 16 17" >
<path d="M0.6 1.6H11L14.8 5.2V15.4H0.6Z" fill="#fff" stroke="#000" stroke-width="1"/>
<path d="M15.2 5.6V15.9H1.2" fill="none" stroke="#000" stroke-width="1"/>
<path d="M11 1.8V5.2H14.6Z" fill="#e0e0e0" stroke="#808080" stroke-width="0.6"/>
<rect x="1.8" y="4.6" width="2.4" height="3" fill="#ffff00"/><rect x="11.4" y="5.6" width="2.4" height="2.6" fill="#ffff00"/><rect x="5.8" y="11.4" width="3.6" height="3.2" fill="#ffff00"/>
<g transform="translate(1.8,3.4)"><path d="M2.4 0H4.8V1.2H7V0H9.4V1.2L10.2 2.6V4L11.6 6.6V10.6H7.4V8.4H4.4V10.6H0V6.6L1.4 4V2.6L2.4 1.2Z" fill="#000"/>
<g fill="#fff"><rect x="2.6" y="1" width="1" height="2"/><rect x="8.2" y="1" width="1" height="2"/><rect x="1.6" y="5" width="1" height="2"/><rect x="9.2" y="5" width="1" height="2"/><rect x="5.4" y="5.4" width="1" height="1.2"/><rect x="1.4" y="8.6" width="1" height="1"/><rect x="9.4" y="8.6" width="1" height="1"/><rect x="4.4" y="3.4" width="0.8" height="1.6"/><rect x="6.8" y="3.4" width="0.8" height="1.6"/></g></g>
</svg>
<div style="left:426px;top:155px;width:249px;height:21px;background:#fff;border:1px solid #e4e5ea;border-radius:2px;box-shadow:0 0 0 1px rgba(236,236,236,.7);"></div>
<svg class="i" style="left:663px;top:164px" width="7" height="4" viewBox="0 0 7 4" ><g shape-rendering="crispEdges" fill="#000"><rect x="0" y="0" width="7" height="1"/><rect x="1" y="1" width="5" height="1"/><rect x="2" y="2" width="3" height="1"/><rect x="3" y="3" width="1" height="1"/></g></svg>
<div style="left:677px;top:157px;width:1px;height:18px;background:#8c8c8c;"></div>
<svg class="i" style="left:686px;top:159px" width="16" height="16" viewBox="0 0 16 16" >
<path d="M8 0.7C12.2 0.7 15.3 3.2 15.3 6.5C15.3 9.3 13 11.4 9.8 12.1L8.6 15.4L7 12.3C3.2 12 0.7 9.6 0.7 6.5C0.7 3.2 3.8 0.7 8 0.7Z" fill="#fff" stroke="#000" stroke-width="1.2"/>
<path d="M9.4 12L8.8 15L12.4 10.8" fill="#808080"/>
<rect x="6.2" y="2.2" width="2.2" height="2" fill="#0000f8"/><path d="M5.4 5.8H8.2V9.6M5.2 10H10" stroke="#0000f8" stroke-width="1.6" fill="none"/>
</svg>
<div style="left:708px;top:157px;width:1px;height:18px;background:#8c8c8c;"></div>
<svg class="i" style="left:715px;top:159px" width="17" height="16" viewBox="0 0 17 16" ><path d="M0 3.6L5.2 9L0 14.4Z" fill="#000090"/><path d="M0 12.6V14.4L1.8 12.6Z" fill="#0000f0"/>
<path d="M5 0.5H15V13H5Z" fill="#000"/>
<path d="M8 2.2L14.2 0.6V13.4L8 15.4Z" fill="#008080"/>
<path d="M14.6 1V13" stroke="#c0a000" stroke-width="1"/>
<rect x="8.8" y="8" width="0.9" height="1.6" fill="#c0e0e0"/></svg>
<div style="left:737px;top:157px;width:1px;height:18px;background:#8c8c8c;"></div>
<svg class="i" width="0" height="0" style="left:0;top:0"><defs><g id="fw"><path d="M0.5 0.5H6.5L9.5 3.5V11.5H0.5Z" fill="#ffffe8" stroke="#808000"/><path d="M6.5 0.5V3.5H9.5" fill="none" stroke="#808000"/><path d="M2 2.5H5M2 5.5H8M2 7.5H8M2 9.5H8" stroke="#ffff00" stroke-width="1"/></g><g id="fy"><path d="M0.5 0.5H6.5L9.5 3.5V11.5H0.5Z" fill="#ffff00" stroke="#808000"/><path d="M6.5 0.5V3.5H9.5Z" fill="#ffffd0" stroke="#808000"/><path d="M2 2.5H5M2 5.5H8M2 7.5H8M2 9.5H8" stroke="#808000" stroke-width="1"/></g></defs></svg>
<div style="left:14px;top:207px;width:96px;height:17px;background:linear-gradient(#dde8f6,#cddef2);border:1px solid #9cc0ea;border-radius:3px;"></div>
<div style="left:15px;top:208px;width:94px;height:15px;border:1px dotted #101030;border-radius:2px;"></div>
<div style="left:398px;top:479px;width:96px;height:17px;background:linear-gradient(#eaebec,#dadde2);border:1px solid #b2d0f4;border-radius:3px;"></div>
<svg class="i" style="left:15px;top:209px" width="15" height="12" viewBox="0 0 15 12"><path d="M0 4H8V0.5L14.5 6L8 11.5V8H0Z" fill="#00a000"/><path d="M0 5H8.6V2.6L12.8 6L8.6 9.4V7H0Z" fill="#f00000"/></svg>
<span class="t l" style="left:32px;top:208px">H999</span>
<svg class="i" style="left:17px;top:226px" width="10" height="12"><use href="#fw"/></svg>
<span class="t l" style="left:32px;top:225px">F-1</span>
<svg class="i" style="left:17px;top:243px" width="10" height="12"><use href="#fw"/></svg>
<span class="t l" style="left:32px;top:242px">F-2</span>
<svg class="i" style="left:17px;top:260px" width="10" height="12"><use href="#fw"/></svg>
<span class="t l" style="left:32px;top:259px">F-3</span>
<svg class="i" style="left:17px;top:277px" width="10" height="12"><use href="#fw"/></svg>
<span class="t l" style="left:32px;top:276px">F-4</span>
<svg class="i" style="left:17px;top:294px" width="10" height="12"><use href="#fw"/></svg>
<span class="t l" style="left:32px;top:293px">F-5-1</span>
<svg class="i" style="left:17px;top:311px" width="10" height="12"><use href="#fw"/></svg>
<span class="t l" style="left:32px;top:310px">F-6</span>
<svg class="i" style="left:17px;top:328px" width="10" height="12"><use href="#fw"/></svg>
<span class="t l" style="left:32px;top:327px">F-7</span>
<svg class="i" style="left:17px;top:345px" width="10" height="12"><use href="#fw"/></svg>
<span class="t l" style="left:32px;top:344px">F-7-1</span>
<svg class="i" style="left:17px;top:362px" width="10" height="12"><use href="#fw"/></svg>
<span class="t l" style="left:32px;top:361px">F-8</span>
<svg class="i" style="left:17px;top:379px" width="10" height="12"><use href="#fw"/></svg>
<span class="t l" style="left:32px;top:378px">F-8-1</span>
<svg class="i" style="left:17px;top:396px" width="10" height="12"><use href="#fw"/></svg>
<span class="t l" style="left:32px;top:395px">F-8-2</span>
<svg class="i" style="left:17px;top:413px" width="10" height="12"><use href="#fw"/></svg>
<span class="t l" style="left:32px;top:412px">F-8-4</span>
<svg class="i" style="left:17px;top:430px" width="10" height="12"><use href="#fw"/></svg>
<span class="t l" style="left:32px;top:429px">F-8-5</span>
<svg class="i" style="left:17px;top:447px" width="10" height="12"><use href="#fw"/></svg>
<span class="t l" style="left:32px;top:446px">F-9-3</span>
<svg class="i" style="left:17px;top:464px" width="10" height="12"><use href="#fw"/></svg>
<span class="t l" style="left:32px;top:463px">F-13</span>
<svg class="i" style="left:17px;top:481px" width="10" height="12"><use href="#fw"/></svg>
<span class="t l" style="left:32px;top:480px">F-14</span>
<svg class="i" style="left:17px;top:498px" width="10" height="12"><use href="#fw"/></svg>
<span class="t l" style="left:32px;top:497px">F-14-1</span>
<svg class="i" style="left:17px;top:515px" width="10" height="12"><use href="#fw"/></svg>
<span class="t l" style="left:32px;top:514px">F-15</span>
<svg class="i" style="left:17px;top:532px" width="10" height="12"><use href="#fw"/></svg>
<span class="t l" style="left:32px;top:531px">F-16</span>
<svg class="i" style="left:17px;top:549px" width="10" height="12"><use href="#fw"/></svg>
<span class="t l" style="left:32px;top:548px">F-16-1</span>
<svg class="i" style="left:17px;top:566px" width="10" height="12"><use href="#fw"/></svg>
<span class="t l" style="left:32px;top:565px">F-16-2</span>
<svg class="i" style="left:17px;top:583px" width="10" height="12"><use href="#fw"/></svg>
<span class="t l" style="left:32px;top:582px">F-17-2</span>
<svg class="i" style="left:17px;top:600px" width="10" height="12"><use href="#fw"/></svg>
<span class="t l" style="left:32px;top:599px">F-17-3</span>
<svg class="i" style="left:17px;top:617px" width="10" height="12"><use href="#fw"/></svg>
<span class="t l" style="left:32px;top:616px">F-21-2</span>
<svg class="i" style="left:17px;top:634px" width="10" height="12"><use href="#fw"/></svg>
<span class="t l" style="left:32px;top:633px">F-22</span>
<svg class="i" style="left:17px;top:651px" width="10" height="12"><use href="#fw"/></svg>
<span class="t l" style="left:32px;top:650px">F-24</span>
<svg class="i" style="left:17px;top:668px" width="10" height="12"><use href="#fw"/></svg>
<span class="t l" style="left:32px;top:667px">F-34</span>
<svg class="i" style="left:17px;top:685px" width="10" height="12"><use href="#fw"/></svg>
<span class="t l" style="left:32px;top:684px">F-38</span>
<svg class="i" style="left:17px;top:702px" width="10" height="12"><use href="#fw"/></svg>
<span class="t l" style="left:32px;top:701px">F-38-1</span>
<svg class="i" style="left:17px;top:719px" width="10" height="12"><use href="#fw"/></svg>
<span class="t l" style="left:32px;top:718px">F-39</span>
<svg class="i" style="left:17px;top:736px" width="10" height="12"><use href="#fw"/></svg>
<span class="t l" style="left:32px;top:735px">F-40</span>
<svg class="i" style="left:17px;top:753px" width="10" height="12"><use href="#fw"/></svg>
<span class="t l" style="left:32px;top:752px">F-42</span>
<svg class="i" style="left:17px;top:770px" width="10" height="12"><use href="#fw"/></svg>
<span class="t l" style="left:32px;top:769px">F-42-1</span>
<svg class="i" style="left:17px;top:787px" width="10" height="12"><use href="#fw"/></svg>
<span class="t l" style="left:32px;top:786px">F-42-2</span>
<svg class="i" style="left:17px;top:804px" width="10" height="12"><use href="#fw"/></svg>
<span class="t l" style="left:32px;top:803px">F-42-3</span>
<svg class="i" style="left:17px;top:821px" width="10" height="12"><use href="#fw"/></svg>
<span class="t l" style="left:32px;top:820px">F-42-4</span>
<svg class="i" style="left:17px;top:838px" width="10" height="12"><use href="#fw"/></svg>
<span class="t l" style="left:32px;top:837px">F-42-5</span>
<svg class="i" style="left:17px;top:855px" width="10" height="12"><use href="#fw"/></svg>
<span class="t l" style="left:32px;top:854px">F-42-6</span>
<svg class="i" style="left:17px;top:872px" width="10" height="12"><use href="#fw"/></svg>
<span class="t l" style="left:32px;top:871px">F-42-7</span>
<svg class="i" style="left:17px;top:889px" width="10" height="12"><use href="#fw"/></svg>
<span class="t l" style="left:32px;top:888px">F-44</span>
<svg class="i" style="left:17px;top:906px" width="10" height="12"><use href="#fw"/></svg>
<span class="t l" style="left:32px;top:905px">F-47</span>
<svg class="i" style="left:113px;top:209px" width="10" height="12"><use href="#fw"/></svg>
<span class="t l" style="left:128px;top:208px">F-49</span>
<svg class="i" style="left:113px;top:226px" width="10" height="12"><use href="#fw"/></svg>
<span class="t l" style="left:128px;top:225px">F-50</span>
<svg class="i" style="left:113px;top:243px" width="10" height="12"><use href="#fw"/></svg>
<span class="t l" style="left:128px;top:242px">F-54</span>
<svg class="i" style="left:113px;top:260px" width="10" height="12"><use href="#fw"/></svg>
<span class="t l" style="left:128px;top:259px">F-54-1</span>
<svg class="i" style="left:113px;top:277px" width="10" height="12"><use href="#fw"/></svg>
<span class="t l" style="left:128px;top:276px">F-54-2</span>
<svg class="i" style="left:113px;top:294px" width="10" height="12"><use href="#fw"/></svg>
<span class="t l" style="left:128px;top:293px">F-55</span>
<svg class="i" style="left:113px;top:311px" width="10" height="12"><use href="#fw"/></svg>
<span class="t l" style="left:128px;top:310px">F-65</span>
<svg class="i" style="left:113px;top:328px" width="10" height="12"><use href="#fw"/></svg>
<span class="t l" style="left:128px;top:327px">F-65-1</span>
<svg class="i" style="left:113px;top:345px" width="10" height="12"><use href="#fw"/></svg>
<span class="t l" style="left:128px;top:344px">F-65-9</span>
<svg class="i" style="left:113px;top:362px" width="10" height="12"><use href="#fw"/></svg>
<span class="t l" style="left:128px;top:361px">F-70</span>
<svg class="i" style="left:113px;top:379px" width="10" height="12"><use href="#fw"/></svg>
<span class="t l" style="left:128px;top:378px">F-77</span>
<svg class="i" style="left:113px;top:396px" width="10" height="12"><use href="#fw"/></svg>
<span class="t l" style="left:128px;top:395px">F-78</span>
<svg class="i" style="left:113px;top:413px" width="10" height="12"><use href="#fw"/></svg>
<span class="t l" style="left:128px;top:412px">F-86</span>
<svg class="i" style="left:113px;top:430px" width="10" height="12"><use href="#fw"/></svg>
<span class="t l" style="left:128px;top:429px">F-90</span>
<svg class="i" style="left:113px;top:447px" width="10" height="12"><use href="#fw"/></svg>
<span class="t l" style="left:128px;top:446px">F-91</span>
<svg class="i" style="left:113px;top:464px" width="10" height="12"><use href="#fw"/></svg>
<span class="t l" style="left:128px;top:463px">F-950</span>
<svg class="i" style="left:113px;top:481px" width="10" height="12"><use href="#fw"/></svg>
<span class="t l" style="left:128px;top:480px">F-1507</span>
<svg class="i" style="left:113px;top:498px" width="10" height="12"><use href="#fw"/></svg>
<span class="t l" style="left:128px;top:497px">F17-1</span>
<svg class="i" style="left:113px;top:515px" width="10" height="12"><use href="#fw"/></svg>
<span class="t l" style="left:128px;top:514px">F17-2</span>
<svg class="i" style="left:113px;top:532px" width="10" height="12"><use href="#fw"/></svg>
<span class="t l" style="left:128px;top:531px">F17-3</span>
<svg class="i" style="left:113px;top:549px" width="10" height="12"><use href="#fw"/></svg>
<span class="t l" style="left:128px;top:548px">F17-4</span>
<svg class="i" style="left:113px;top:566px" width="10" height="12"><use href="#fw"/></svg>
<span class="t l" style="left:128px;top:565px">F17-5</span>
<svg class="i" style="left:113px;top:583px" width="10" height="12"><use href="#fw"/></svg>
<span class="t l" style="left:128px;top:582px">F17-6</span>
<svg class="i" style="left:113px;top:600px" width="10" height="12"><use href="#fw"/></svg>
<span class="t l" style="left:128px;top:599px">F17-7</span>
<svg class="i" style="left:113px;top:617px" width="10" height="12"><use href="#fw"/></svg>
<span class="t l" style="left:128px;top:616px">F17-8</span>
<svg class="i" style="left:113px;top:634px" width="10" height="12"><use href="#fw"/></svg>
<span class="t l" style="left:128px;top:633px">F17-9</span>
<svg class="i" style="left:113px;top:651px" width="10" height="12"><use href="#fw"/></svg>
<span class="t l" style="left:128px;top:650px">F310-1</span>
<svg class="i" style="left:113px;top:668px" width="10" height="12"><use href="#fw"/></svg>
<span class="t l" style="left:128px;top:667px">F2003-2-15</span>
<svg class="i" style="left:113px;top:685px" width="10" height="12"><use href="#fw"/></svg>
<span class="t l" style="left:128px;top:684px">E501-78-2</span>
<svg class="i" style="left:113px;top:702px" width="10" height="12"><use href="#fw"/></svg>
<span class="t l" style="left:128px;top:701px">E1303-1-13</span>
<svg class="i" style="left:113px;top:719px" width="10" height="12"><use href="#fw"/></svg>
<span class="t l" style="left:128px;top:718px">E31101-146...</span>
<svg class="i" style="left:113px;top:736px" width="10" height="12"><use href="#fw"/></svg>
<span class="t l" style="left:128px;top:735px">C111-311</span>
<svg class="i" style="left:113px;top:753px" width="10" height="12"><use href="#fw"/></svg>
<span class="t l" style="left:128px;top:752px">C111-324</span>
<svg class="i" style="left:113px;top:770px" width="10" height="12"><use href="#fw"/></svg>
<span class="t l" style="left:128px;top:769px">C111-426</span>
<svg class="i" style="left:113px;top:787px" width="10" height="12"><use href="#fw"/></svg>
<span class="t l" style="left:128px;top:786px">C111-782</span>
<svg class="i" style="left:113px;top:804px" width="10" height="12"><use href="#fw"/></svg>
<span class="t l" style="left:128px;top:803px">C111-806</span>
<svg class="i" style="left:113px;top:821px" width="10" height="12"><use href="#fw"/></svg>
<span class="t l" style="left:128px;top:820px">C111-807</span>
<svg class="i" style="left:113px;top:838px" width="10" height="12"><use href="#fw"/></svg>
<span class="t l" style="left:128px;top:837px">C111-813</span>
<svg class="i" style="left:113px;top:855px" width="10" height="12"><use href="#fw"/></svg>
<span class="t l" style="left:128px;top:854px">C111-975</span>
<svg class="i" style="left:113px;top:872px" width="10" height="12"><use href="#fw"/></svg>
<span class="t l" style="left:128px;top:871px">C111-1247</span>
<svg class="i" style="left:113px;top:889px" width="10" height="12"><use href="#fw"/></svg>
<span class="t l" style="left:128px;top:888px">C111-1513</span>
<svg class="i" style="left:113px;top:906px" width="10" height="12"><use href="#fw"/></svg>
<span class="t l" style="left:128px;top:905px">C111-1518</span>
<svg class="i" style="left:209px;top:209px" width="10" height="12"><use href="#fw"/></svg>
<span class="t l" style="left:224px;top:208px">C111-1521</span>
<svg class="i" style="left:209px;top:226px" width="10" height="12"><use href="#fw"/></svg>
<span class="t l" style="left:224px;top:225px">C111-1556</span>
<svg class="i" style="left:209px;top:243px" width="10" height="12"><use href="#fw"/></svg>
<span class="t l" style="left:224px;top:242px">C111-1602</span>
<svg class="i" style="left:209px;top:260px" width="10" height="12"><use href="#fw"/></svg>
<span class="t l" style="left:224px;top:259px">C111-1611</span>
<svg class="i" style="left:209px;top:277px" width="10" height="12"><use href="#fw"/></svg>
<span class="t l" style="left:224px;top:276px">C111-1734</span>
<svg class="i" style="left:209px;top:294px" width="10" height="12"><use href="#fw"/></svg>
<span class="t l" style="left:224px;top:293px">C111-1800</span>
<svg class="i" style="left:209px;top:311px" width="10" height="12"><use href="#fw"/></svg>
<span class="t l" style="left:224px;top:310px">C111-1805</span>
<svg class="i" style="left:209px;top:328px" width="10" height="12"><use href="#fw"/></svg>
<span class="t l" style="left:224px;top:327px">C111-1809</span>
<svg class="i" style="left:209px;top:345px" width="10" height="12"><use href="#fw"/></svg>
<span class="t l" style="left:224px;top:344px">C111-1924</span>
<svg class="i" style="left:209px;top:362px" width="10" height="12"><use href="#fw"/></svg>
<span class="t l" style="left:224px;top:361px">C111-2118</span>
<svg class="i" style="left:209px;top:379px" width="10" height="12"><use href="#fw"/></svg>
<span class="t l" style="left:224px;top:378px">C111-9100</span>
<svg class="i" style="left:209px;top:396px" width="10" height="12"><use href="#fw"/></svg>
<span class="t l" style="left:224px;top:395px">C111-9103-1</span>
<svg class="i" style="left:209px;top:413px" width="10" height="12"><use href="#fw"/></svg>
<span class="t l" style="left:224px;top:412px">C111-9109</span>
<svg class="i" style="left:209px;top:430px" width="10" height="12"><use href="#fw"/></svg>
<span class="t l" style="left:224px;top:429px">C111-9130</span>
<svg class="i" style="left:209px;top:447px" width="10" height="12"><use href="#fw"/></svg>
<span class="t l" style="left:224px;top:446px">C111-9412-1</span>
<svg class="i" style="left:209px;top:464px" width="10" height="12"><use href="#fw"/></svg>
<span class="t l" style="left:224px;top:463px">C111-9852</span>
<svg class="i" style="left:209px;top:481px" width="10" height="12"><use href="#fw"/></svg>
<span class="t l" style="left:224px;top:480px">C112-1</span>
<svg class="i" style="left:209px;top:498px" width="10" height="12"><use href="#fw"/></svg>
<span class="t l" style="left:224px;top:497px">C112-8</span>
<svg class="i" style="left:209px;top:515px" width="10" height="12"><use href="#fw"/></svg>
<span class="t l" style="left:224px;top:514px">C112-11</span>
<svg class="i" style="left:209px;top:532px" width="10" height="12"><use href="#fw"/></svg>
<span class="t l" style="left:224px;top:531px">C112-25</span>
<svg class="i" style="left:209px;top:549px" width="10" height="12"><use href="#fw"/></svg>
<span class="t l" style="left:224px;top:548px">C112-29</span>
<svg class="i" style="left:209px;top:566px" width="10" height="12"><use href="#fw"/></svg>
<span class="t l" style="left:224px;top:565px">C112-81</span>
<svg class="i" style="left:209px;top:583px" width="10" height="12"><use href="#fw"/></svg>
<span class="t l" style="left:224px;top:582px">C113-175</span>
<svg class="i" style="left:209px;top:600px" width="10" height="12"><use href="#fw"/></svg>
<span class="t l" style="left:224px;top:599px">C113-226</span>
<svg class="i" style="left:209px;top:617px" width="10" height="12"><use href="#fw"/></svg>
<span class="t l" style="left:224px;top:616px">C113-227</span>
<svg class="i" style="left:209px;top:634px" width="10" height="12"><use href="#fw"/></svg>
<span class="t l" style="left:224px;top:633px">C113-228</span>
<svg class="i" style="left:209px;top:651px" width="10" height="12"><use href="#fw"/></svg>
<span class="t l" style="left:224px;top:650px">C113-229</span>
<svg class="i" style="left:209px;top:668px" width="10" height="12"><use href="#fw"/></svg>
<span class="t l" style="left:224px;top:667px">C113-230</span>
<svg class="i" style="left:209px;top:685px" width="10" height="12"><use href="#fw"/></svg>
<span class="t l" style="left:224px;top:684px">C113-256</span>
<svg class="i" style="left:209px;top:702px" width="10" height="12"><use href="#fw"/></svg>
<span class="t l" style="left:224px;top:701px">C113-271</span>
<svg class="i" style="left:209px;top:719px" width="10" height="12"><use href="#fw"/></svg>
<span class="t l" style="left:224px;top:718px">C115-1</span>
<svg class="i" style="left:209px;top:736px" width="10" height="12"><use href="#fw"/></svg>
<span class="t l" style="left:224px;top:735px">C115-73</span>
<svg class="i" style="left:209px;top:753px" width="10" height="12"><use href="#fw"/></svg>
<span class="t l" style="left:224px;top:752px">C121-777</span>
<svg class="i" style="left:209px;top:770px" width="10" height="12"><use href="#fw"/></svg>
<span class="t l" style="left:224px;top:769px">C121-9030</span>
<svg class="i" style="left:209px;top:787px" width="10" height="12"><use href="#fw"/></svg>
<span class="t l" style="left:224px;top:786px">C121-9189</span>
<svg class="i" style="left:209px;top:804px" width="10" height="12"><use href="#fw"/></svg>
<span class="t l" style="left:224px;top:803px">C147-9020-1</span>
<svg class="i" style="left:209px;top:821px" width="10" height="12"><use href="#fw"/></svg>
<span class="t l" style="left:224px;top:820px">C148-401</span>
<svg class="i" style="left:209px;top:838px" width="10" height="12"><use href="#fw"/></svg>
<span class="t l" style="left:224px;top:837px">C150-9031</span>
<svg class="i" style="left:209px;top:855px" width="10" height="12"><use href="#fw"/></svg>
<span class="t l" style="left:224px;top:854px">C150-9081</span>
<svg class="i" style="left:209px;top:872px" width="10" height="12"><use href="#fw"/></svg>
<span class="t l" style="left:224px;top:871px">C150-9140</span>
<svg class="i" style="left:209px;top:889px" width="10" height="12"><use href="#fw"/></svg>
<span class="t l" style="left:224px;top:888px">C150-9627</span>
<svg class="i" style="left:209px;top:906px" width="10" height="12"><use href="#fw"/></svg>
<span class="t l" style="left:224px;top:905px">C201-312</span>
<svg class="i" style="left:305px;top:209px" width="10" height="12"><use href="#fw"/></svg>
<span class="t l" style="left:320px;top:208px">C202-435</span>
<svg class="i" style="left:305px;top:226px" width="10" height="12"><use href="#fw"/></svg>
<span class="t l" style="left:320px;top:225px">C202-1102</span>
<svg class="i" style="left:305px;top:243px" width="10" height="12"><use href="#fw"/></svg>
<span class="t l" style="left:320px;top:242px">C202-1140</span>
<svg class="i" style="left:305px;top:260px" width="10" height="12"><use href="#fw"/></svg>
<span class="t l" style="left:320px;top:259px">C202-1141</span>
<svg class="i" style="left:305px;top:277px" width="10" height="12"><use href="#fw"/></svg>
<span class="t l" style="left:320px;top:276px">C202-1245</span>
<svg class="i" style="left:305px;top:294px" width="10" height="12"><use href="#fw"/></svg>
<span class="t l" style="left:320px;top:293px">C202-2101</span>
<svg class="i" style="left:305px;top:311px" width="10" height="12"><use href="#fw"/></svg>
<span class="t l" style="left:320px;top:310px">C202-2102</span>
<svg class="i" style="left:305px;top:328px" width="10" height="12"><use href="#fw"/></svg>
<span class="t l" style="left:320px;top:327px">C203-205</span>
<svg class="i" style="left:305px;top:345px" width="10" height="12"><use href="#fw"/></svg>
<span class="t l" style="left:320px;top:344px">C203-902</span>
<svg class="i" style="left:305px;top:362px" width="10" height="12"><use href="#fw"/></svg>
<span class="t l" style="left:320px;top:361px">C203-1870</span>
<svg class="i" style="left:305px;top:379px" width="10" height="12"><use href="#fw"/></svg>
<span class="t l" style="left:320px;top:378px">C204-102</span>
<svg class="i" style="left:305px;top:396px" width="10" height="12"><use href="#fw"/></svg>
<span class="t l" style="left:320px;top:395px">C204-310</span>
<svg class="i" style="left:305px;top:413px" width="10" height="12"><use href="#fw"/></svg>
<span class="t l" style="left:320px;top:412px">C204-502</span>
<svg class="i" style="left:305px;top:430px" width="10" height="12"><use href="#fw"/></svg>
<span class="t l" style="left:320px;top:429px">C204-504</span>
<svg class="i" style="left:305px;top:447px" width="10" height="12"><use href="#fw"/></svg>
<span class="t l" style="left:320px;top:446px">C204-1400</span>
<svg class="i" style="left:305px;top:464px" width="10" height="12"><use href="#fw"/></svg>
<span class="t l" style="left:320px;top:463px">C204-1401</span>
<svg class="i" style="left:305px;top:481px" width="10" height="12"><use href="#fw"/></svg>
<span class="t l" style="left:320px;top:480px">C204-2901</span>
<svg class="i" style="left:305px;top:498px" width="10" height="12"><use href="#fw"/></svg>
<span class="t l" style="left:320px;top:497px">C205-102</span>
<svg class="i" style="left:305px;top:515px" width="10" height="12"><use href="#fw"/></svg>
<span class="t l" style="left:320px;top:514px">C207-103</span>
<svg class="i" style="left:305px;top:532px" width="10" height="12"><use href="#fw"/></svg>
<span class="t l" style="left:320px;top:531px">C207-117</span>
<svg class="i" style="left:305px;top:549px" width="10" height="12"><use href="#fw"/></svg>
<span class="t l" style="left:320px;top:548px">C212-500</span>
<svg class="i" style="left:305px;top:566px" width="10" height="12"><use href="#fw"/></svg>
<span class="t l" style="left:320px;top:565px">C212-906</span>
<svg class="i" style="left:305px;top:583px" width="10" height="12"><use href="#fw"/></svg>
<span class="t l" style="left:320px;top:582px">C212-907</span>
<svg class="i" style="left:305px;top:600px" width="10" height="12"><use href="#fw"/></svg>
<span class="t l" style="left:320px;top:599px">C212-1601</span>
<svg class="i" style="left:305px;top:617px" width="10" height="12"><use href="#fw"/></svg>
<span class="t l" style="left:320px;top:616px">C212-2000</span>
<svg class="i" style="left:305px;top:634px" width="10" height="12"><use href="#fw"/></svg>
<span class="t l" style="left:320px;top:633px">C215-202</span>
<svg class="i" style="left:305px;top:651px" width="10" height="12"><use href="#fw"/></svg>
<span class="t l" style="left:320px;top:650px">C215-701</span>
<svg class="i" style="left:305px;top:668px" width="10" height="12"><use href="#fw"/></svg>
<span class="t l" style="left:320px;top:667px">C215-703</span>
<svg class="i" style="left:305px;top:685px" width="10" height="12"><use href="#fw"/></svg>
<span class="t l" style="left:320px;top:684px">C215-1700</span>
<svg class="i" style="left:305px;top:702px" width="10" height="12"><use href="#fw"/></svg>
<span class="t l" style="left:320px;top:701px">C218-126</span>
<svg class="i" style="left:305px;top:719px" width="10" height="12"><use href="#fw"/></svg>
<span class="t l" style="left:320px;top:718px">C232-700</span>
<svg class="i" style="left:305px;top:736px" width="10" height="12"><use href="#fw"/></svg>
<span class="t l" style="left:320px;top:735px">C233-301</span>
<svg class="i" style="left:305px;top:753px" width="10" height="12"><use href="#fw"/></svg>
<span class="t l" style="left:320px;top:752px">C233-301-1</span>
<svg class="i" style="left:305px;top:770px" width="10" height="12"><use href="#fw"/></svg>
<span class="t l" style="left:320px;top:769px">C233-1021</span>
<svg class="i" style="left:305px;top:787px" width="10" height="12"><use href="#fw"/></svg>
<span class="t l" style="left:320px;top:786px">C233-1411</span>
<svg class="i" style="left:305px;top:804px" width="10" height="12"><use href="#fw"/></svg>
<span class="t l" style="left:320px;top:803px">C233-2202</span>
<svg class="i" style="left:305px;top:821px" width="10" height="12"><use href="#fw"/></svg>
<span class="t l" style="left:320px;top:820px">C235-150</span>
<svg class="i" style="left:305px;top:838px" width="10" height="12"><use href="#fw"/></svg>
<span class="t l" style="left:320px;top:837px">C240-1</span>
<svg class="i" style="left:305px;top:855px" width="10" height="12"><use href="#fw"/></svg>
<span class="t l" style="left:320px;top:854px">C240-2</span>
<svg class="i" style="left:305px;top:872px" width="10" height="12"><use href="#fw"/></svg>
<span class="t l" style="left:320px;top:871px">C240-51</span>
<svg class="i" style="left:305px;top:889px" width="10" height="12"><use href="#fw"/></svg>
<span class="t l" style="left:320px;top:888px">C240-53</span>
<svg class="i" style="left:305px;top:906px" width="10" height="12"><use href="#fw"/></svg>
<span class="t l" style="left:320px;top:905px">C240-102</span>
<svg class="i" style="left:401px;top:209px" width="10" height="12"><use href="#fw"/></svg>
<span class="t l" style="left:416px;top:208px">C240-129</span>
<svg class="i" style="left:401px;top:226px" width="10" height="12"><use href="#fw"/></svg>
<span class="t l" style="left:416px;top:225px">C1110-9105</span>
<svg class="i" style="left:401px;top:243px" width="10" height="12"><use href="#fw"/></svg>
<span class="t l" style="left:416px;top:242px">C1113-107</span>
<svg class="i" style="left:401px;top:260px" width="10" height="12"><use href="#fw"/></svg>
<span class="t l" style="left:416px;top:259px">C1113-273</span>
<svg class="i" style="left:401px;top:277px" width="10" height="12"><use href="#fw"/></svg>
<span class="t l" style="left:416px;top:276px">C1113-316</span>
<svg class="i" style="left:401px;top:294px" width="10" height="12"><use href="#fw"/></svg>
<span class="t l" style="left:416px;top:293px">C1410-1</span>
<svg class="i" style="left:401px;top:311px" width="10" height="12"><use href="#fw"/></svg>
<span class="t l" style="left:416px;top:310px">C1411-1</span>
<svg class="i" style="left:401px;top:328px" width="10" height="12"><use href="#fw"/></svg>
<span class="t l" style="left:416px;top:327px">C1517-311</span>
<svg class="i" style="left:401px;top:345px" width="10" height="12"><use href="#fw"/></svg>
<span class="t l" style="left:416px;top:344px">C1537-36</span>
<svg class="i" style="left:401px;top:362px" width="10" height="12"><use href="#fw"/></svg>
<span class="t l" style="left:416px;top:361px">C1537-40</span>
<svg class="i" style="left:401px;top:379px" width="10" height="12"><use href="#fw"/></svg>
<span class="t l" style="left:416px;top:378px">C1548-4</span>
<svg class="i" style="left:401px;top:396px" width="10" height="12"><use href="#fw"/></svg>
<span class="t l" style="left:416px;top:395px">C1550-101</span>
<svg class="i" style="left:401px;top:413px" width="10" height="12"><use href="#fy"/></svg>
<span class="t l" style="left:416px;top:412px">Ф1-К2-С1</span>
<svg class="i" style="left:401px;top:430px" width="10" height="12"><use href="#fy"/></svg>
<span class="t l" style="left:416px;top:429px">Ф1-К2-С7</span>
<svg class="i" style="left:401px;top:447px" width="10" height="12"><use href="#fy"/></svg>
<span class="t l" style="left:416px;top:446px">Ф1-К2-С8</span>
<svg class="i" style="left:401px;top:464px" width="10" height="12"><use href="#fy"/></svg>
<span class="t l" style="left:416px;top:463px">Ф1-К6-1</span>
<svg class="i" style="left:401px;top:481px" width="10" height="12"><use href="#fy"/></svg>
<span class="t l" style="left:416px;top:480px">Ф1-М29-1</span>
<svg class="i" style="left:401px;top:498px" width="10" height="12"><use href="#fy"/></svg>
<span class="t l" style="left:416px;top:497px">Ф1-М29-3</span>
<svg class="i" style="left:401px;top:515px" width="10" height="12"><use href="#fy"/></svg>
<span class="t l" style="left:416px;top:514px">Ф1-М29-М2</span>
<svg class="i" style="left:401px;top:532px" width="10" height="12"><use href="#fy"/></svg>
<span class="t l" style="left:416px;top:531px">Ф1-Ф2-О1</span>
<svg class="i" style="left:401px;top:549px" width="10" height="12"><use href="#fy"/></svg>
<span class="t l" style="left:416px;top:548px">Ф1-Ф6-Н</span>
<svg class="i" style="left:401px;top:566px" width="10" height="12"><use href="#fy"/></svg>
<span class="t l" style="left:416px;top:565px">Ф1-Ф6-Н2</span>
<svg class="i" style="left:401px;top:583px" width="10" height="12"><use href="#fy"/></svg>
<span class="t l" style="left:416px;top:582px">Ф1-Ф6-О1</span>
<svg class="i" style="left:401px;top:600px" width="10" height="12"><use href="#fy"/></svg>
<span class="t l" style="left:416px;top:599px">Ф1-Ф6-О2</span>
<svg class="i" style="left:401px;top:617px" width="10" height="12"><use href="#fy"/></svg>
<span class="t l" style="left:416px;top:616px">Ф2001-О-Д</span>
<svg class="i" style="left:401px;top:634px" width="10" height="12"><use href="#fy"/></svg>
<span class="t l" style="left:416px;top:633px">Ф2009-С-Д</span>
<div style="left:0px;top:984px;width:1280px;height:40px;background:linear-gradient(90deg,#8397b0 0,#8397b0 52px,#a9c1de 90px,#a9c1de 1083px,#8296af 1106px,#8296af 1280px);"></div>
<div style="left:0px;top:984px;width:1280px;height:1px;background:rgba(10,14,24,.56);"></div>
<div style="left:0px;top:985px;width:1280px;height:1px;background:rgba(255,255,255,.4);"></div>
<svg class="i" style="left:8px;top:985px" width="38" height="38" viewBox="0 0 38 38" >
<defs>
<radialGradient id="orb" cx="50%" cy="95%" r="85%"><stop offset="0" stop-color="#35e0ff"/><stop offset="0.35" stop-color="#0f86c8"/><stop offset="0.75" stop-color="#0b4f8e"/><stop offset="1" stop-color="#2c6aa6"/></radialGradient>
<linearGradient id="orbh" x1="0" y1="0" x2="0" y2="1"><stop offset="0" stop-color="#fff" stop-opacity=".75"/><stop offset="1" stop-color="#fff" stop-opacity=".12"/></linearGradient>
</defs>
<circle cx="19" cy="19" r="18" fill="url(#orb)" stroke="#164a7c" stroke-width="1.2"/>
<path d="M2.2 17A17 17 0 0 1 35.8 17Q19 24 2.2 17Z" fill="url(#orbh)"/>
<path d="M9.6 7.4Q13.6 5 17.8 7.4L16.4 16.2Q12.4 14 7.8 16.4Z" fill="#e8501c"/>
<path d="M19.6 8.2Q24 10.8 28.8 8L27 17.6Q22.6 19.8 18.2 17.2Z" fill="#86bd3c"/>
<path d="M7.4 18.2Q11.8 16 16 18.4L14.6 27Q10.6 24.8 5.8 27.2Z" fill="#2e8fdc"/>
<path d="M17.8 19.4Q22.2 21.8 26.6 19.6L25 28.6Q20.6 30.8 16.2 28.2Z" fill="#f8c020"/>
</svg>
<svg class="i" style="left:75px;top:993px" width="29" height="25" viewBox="0 0 29 25" >
<rect x="4" y="1" width="20" height="22" fill="#c6def2" stroke="#8ab4d8" stroke-width="0.8"/>
<rect x="2" y="0.8" width="20" height="22.6" fill="#b4d4ee" stroke="#7daad4" stroke-width="0.8"/>
<rect x="0.5" y="0.5" width="20" height="23.4" fill="#a8cdec" stroke="#6a9ccc" stroke-width="0.9"/>
<circle cx="10.2" cy="12" r="8.4" fill="#f47a14"/>
<circle cx="10.2" cy="10.5" r="6.8" fill="#f8922c" opacity=".7"/>
<path d="M6.6 6.4L15.6 12L6.6 17.6Z" fill="#fff"/>
</svg>
<svg class="i" style="left:136px;top:989px" width="31" height="31" viewBox="0 0 31 31" >
<rect x="14" y="4" width="16" height="23" fill="#fff" stroke="#1e7044" stroke-width="1.2"/>
<path d="M16 7.5H28M16 11H28M16 14.5H28M16 18H28M16 21.5H28M16 25H28" stroke="#1e7044" stroke-width="1.6"/>
<path d="M21 5V27M25.4 5V27" stroke="#fff" stroke-width="1"/>
<path d="M0 3.2L18.4 0V31L0 27.6Z" fill="#1e7044"/>
<path d="M4.6 9.6H7.6L9.4 13.4L11.3 9.6H14.2L10.9 15.4L14.4 21.6H11.3L9.3 17.6L7.4 21.6H4.4L7.8 15.5Z" fill="#fff"/>
</svg>
<div style="left:184px;top:985px;width:59px;height:39px;border:1px solid #5d6e88;border-radius:3px;background:linear-gradient(160deg,#cfdef0 0%,#c0d2e9 40%,#b2c7e1 60%,#b9cde5 100%);box-shadow:inset 0 0 0 1px rgba(255,255,255,.5);"></div>
<div style="left:246px;top:985px;width:59px;height:39px;border:1px solid #5d6e88;border-radius:3px;background:linear-gradient(160deg,#cfdef0 0%,#c0d2e9 40%,#b2c7e1 60%,#b9cde5 100%);box-shadow:inset 0 0 0 1px rgba(255,255,255,.5);"></div>
<div style="left:308px;top:985px;width:59px;height:39px;border:1px solid #5d6e88;border-radius:3px;background:linear-gradient(160deg,#cfdef0 0%,#c0d2e9 40%,#b2c7e1 60%,#b9cde5 100%);box-shadow:inset 0 0 0 1px rgba(255,255,255,.5);"></div>
<div style="left:420px;top:985px;width:9px;height:39px;border:1px solid #5d6e88;border-left:none;border-radius:0 3px 3px 0;background:#b7cbe4;box-shadow:inset -1px 0 0 rgba(255,255,255,.5);"></div>
<div style="left:370px;top:985px;width:54px;height:39px;border:1px solid #5d6e88;border-radius:3px;background:linear-gradient(160deg,#cfdef0 0%,#c0d2e9 40%,#b2c7e1 60%,#b9cde5 100%);box-shadow:inset 0 0 0 1px rgba(255,255,255,.5);"></div>
<div style="left:432px;top:985px;width:59px;height:39px;border:1px solid #5d6e88;border-radius:3px;background:linear-gradient(160deg,#eaf1fa 0%,#dbe7f5 40%,#cbdcf0 60%,#d6e4f4 100%);box-shadow:inset 0 0 0 1px rgba(255,255,255,.7);"></div>
<svg class="i" style="left:197px;top:990px" width="34" height="31" viewBox="0 0 34 31" >
<defs><linearGradient id="exf" x1="0" y1="0" x2="0" y2="1"><stop offset="0" stop-color="#fbeeb8"/><stop offset="1" stop-color="#f2d67a"/></linearGradient>
<linearGradient id="exb" x1="0" y1="0" x2="0" y2="1"><stop offset="0" stop-color="#bfe6fa"/><stop offset="0.5" stop-color="#6cbcec"/><stop offset="1" stop-color="#9ad4f4"/></linearGradient></defs>
<path d="M1 3.5Q1 2 2.5 2H15L16.5 4H30Q31.5 4 31.5 5.5V12H1Z" fill="#efd78e" stroke="#c9a95a" stroke-width="0.8"/>
<path d="M3 2.2H15.6L17 4.2H22" fill="none" stroke="#fff" stroke-width="1.6"/><path d="M12 4.8H24L25 6.4H28" fill="none" stroke="#fff" stroke-width="1.6"/><path d="M19 7.2H29" stroke="#fff" stroke-width="1.6"/>
<rect x="3.6" y="1.6" width="3" height="1.8" fill="#18b030"/><rect x="11.8" y="3.8" width="3" height="1.8" fill="#e02818"/><rect x="19.6" y="6.2" width="3" height="1.8" fill="#1890f0"/>
<path d="M0.8 9H17L19 7.6H31.6V26Q31.6 27.6 30 27.6H2.4Q0.8 27.6 0.8 26Z" fill="url(#exf)" stroke="#c9a548" stroke-width="0.9"/>
<path d="M4.5 19.5Q4.5 17.5 6.5 17.5H26Q28 17.5 28 19.5V30.4H21.6V23.4H10.8V30.4H4.5Z" fill="url(#exb)" stroke="#3c9cdc" stroke-width="1"/>
<path d="M6 19H27" stroke="#e6f6ff" stroke-width="1.2"/>
<path d="M7 12V24M2.5 19.4H11.5M4.4 16.4L9.6 22.4M9.6 16.4L4.4 22.4" stroke="#fff" stroke-width="0.7" opacity=".85"/><circle cx="7" cy="19.4" r="1.6" fill="#fff"/>
</svg>
<svg class="i" style="left:260px;top:988px" width="32" height="32" viewBox="0 0 32 32" >
<defs><radialGradient id="tbg" cx="40%" cy="30%" r="75%"><stop offset="0" stop-color="#4c98e4"/><stop offset="0.6" stop-color="#2264b4"/><stop offset="1" stop-color="#143c80"/></radialGradient></defs>
<path d="M11 1.2Q20 -1 26.6 5Q32 11 30.6 19Q28.6 28 19.6 31Q22.6 27.6 22 24Q26.4 20 25 13.6Q23 8.4 17 8.2Q11.6 8.6 9.4 13L7 10.4Q5.4 6.4 8 3.4Q9.4 1.8 11 1.2Z" fill="url(#tbg)"/>
<path d="M7.6 9.4Q3 12.4 2.4 18Q2.4 24 7 28L8.4 25.4Q9.4 27.8 12 28.6L9.6 22L6.4 16Z" fill="#1c56a4"/>
<path d="M14 4Q20 2.4 25 6.4Q29 10.4 28.6 16" fill="none" stroke="#68b0f0" stroke-width="1.4" opacity=".8"/>
<path d="M5.6 14.6L19.4 10.2L25.2 21.8L12.4 28.2Z" fill="#f0ece4" stroke="#b4aca0" stroke-width="0.7"/>
<path d="M5.6 14.6L16.2 19.6L19.4 10.2" fill="#faf8f4" stroke="#b4aca0" stroke-width="0.8"/>
<path d="M12.4 28.2L15.4 19.4M25.2 21.8L16.6 19.4" stroke="#c8c0b4" stroke-width="0.7"/>
<path d="M7.4 8.6Q8.6 5 12.4 5.6Q10.4 7.4 10.2 10Z" fill="#3c84d8"/>
<path d="M8 9L10.6 9.6L9 10.8Z" fill="#f0a818"/><circle cx="9.6" cy="7.6" r="0.6" fill="#102040"/>
<path d="M19.6 31Q13 32.6 10 29.4L12.4 28.2Q15 29.6 22 24Z" fill="#184890"/>
</svg>
<svg class="i" style="left:320px;top:988px" width="34" height="34" viewBox="0 0 34 34" ><rect x="3" y="12" width="6" height="7" fill="#4c88d8"/><path d="M3 12l1.6 -1.6h6l-1.6 1.6z" fill="#9cc4f0"/><path d="M9 12l1.6 -1.6v7l-1.6 1.6z" fill="#2c5cac"/><path d="M3.4 19V12.4H9" fill="none" stroke="#fff" stroke-width="0.7" opacity=".6"/><rect x="3" y="19" width="6" height="7" fill="#4c88d8"/><path d="M3 19l1.6 -1.6h6l-1.6 1.6z" fill="#9cc4f0"/><path d="M9 19l1.6 -1.6v7l-1.6 1.6z" fill="#2c5cac"/><path d="M3.4 26V19.4H9" fill="none" stroke="#fff" stroke-width="0.7" opacity=".6"/><rect x="9" y="21" width="7" height="7" fill="#4c88d8"/><path d="M9 21l1.6 -1.6h7l-1.6 1.6z" fill="#9cc4f0"/><path d="M16 21l1.6 -1.6v7l-1.6 1.6z" fill="#2c5cac"/><path d="M9.4 28V21.4H16" fill="none" stroke="#fff" stroke-width="0.7" opacity=".6"/><rect x="16" y="15" width="8" height="7" fill="#4c88d8"/><path d="M16 15l1.6 -1.6h8l-1.6 1.6z" fill="#9cc4f0"/><path d="M24 15l1.6 -1.6v7l-1.6 1.6z" fill="#2c5cac"/><path d="M16.4 22V15.4H24" fill="none" stroke="#fff" stroke-width="0.7" opacity=".6"/><rect x="16" y="22" width="8" height="8" fill="#4c88d8"/><path d="M16 22l1.6 -1.6h8l-1.6 1.6z" fill="#9cc4f0"/><path d="M24 22l1.6 -1.6v8l-1.6 1.6z" fill="#2c5cac"/><path d="M16.4 30V22.4H24" fill="none" stroke="#fff" stroke-width="0.7" opacity=".6"/><rect x="23" y="22" width="8" height="9" fill="#4c88d8"/><path d="M23 22l1.6 -1.6h8l-1.6 1.6z" fill="#9cc4f0"/><path d="M31 22l1.6 -1.6v9l-1.6 1.6z" fill="#2c5cac"/><path d="M23.4 31V22.4H31" fill="none" stroke="#fff" stroke-width="0.7" opacity=".6"/><rect x="1" y="2" width="7" height="7" fill="#f06038"/><path d="M1 2l1.6 -1.6h7l-1.6 1.6z" fill="#f8a080"/><path d="M8 2l1.6 -1.6v7l-1.6 1.6z" fill="#c03c18"/><path d="M1.4 9V2.4H8" fill="none" stroke="#fff" stroke-width="0.7" opacity=".6"/><rect x="9" y="6" width="7" height="8" fill="#f06038"/><path d="M9 6l1.6 -1.6h7l-1.6 1.6z" fill="#f8a080"/><path d="M16 6l1.6 -1.6v8l-1.6 1.6z" fill="#c03c18"/><path d="M9.4 14V6.4H16" fill="none" stroke="#fff" stroke-width="0.7" opacity=".6"/><rect x="16" y="7" width="8" height="8" fill="#f06038"/><path d="M16 7l1.6 -1.6h8l-1.6 1.6z" fill="#f8a080"/><path d="M24 7l1.6 -1.6v8l-1.6 1.6z" fill="#c03c18"/><path d="M16.4 15V7.4H24" fill="none" stroke="#fff" stroke-width="0.7" opacity=".6"/><rect x="9" y="14" width="7" height="7" fill="#f06038"/><path d="M9 14l1.6 -1.6h7l-1.6 1.6z" fill="#f8a080"/><path d="M16 14l1.6 -1.6v7l-1.6 1.6z" fill="#c03c18"/><path d="M9.4 21V14.4H16" fill="none" stroke="#fff" stroke-width="0.7" opacity=".6"/></svg>
<svg class="i" style="left:381px;top:988px" width="32" height="32" viewBox="0 0 32 32" >
<defs><radialGradient id="ffg" cx="55%" cy="30%" r="65%"><stop offset="0" stop-color="#58b4f0"/><stop offset="0.55" stop-color="#1c64c0"/><stop offset="1" stop-color="#102c78"/></radialGradient>
<linearGradient id="ffo" x1="0.2" y1="0" x2="0.6" y2="1"><stop offset="0" stop-color="#f08c28"/><stop offset="0.5" stop-color="#ec6c18"/><stop offset="1" stop-color="#e85010"/></linearGradient>
<linearGradient id="ffy" x1="0" y1="0" x2="1" y2="0"><stop offset="0" stop-color="#f8a020"/><stop offset="1" stop-color="#fce048"/></linearGradient></defs>
<circle cx="17" cy="14" r="12.4" fill="url(#ffg)"/>
<path d="M24 3.4Q30.6 8 30.4 17Q29.4 27 20 30.6Q27 25.4 26.6 17Q26.4 9.6 22 6Z" fill="url(#ffy)"/>
<path d="M3.4 5.6Q4.6 7.4 4.4 9.4Q6.6 6.4 10.6 5.6Q8.6 7.6 9 10.4Q11 9.4 13.4 10.6Q10.6 12 10.8 14.4Q11.4 17.6 15 17.4Q17.6 17 19.6 18.4Q17.2 19 16 20.6Q19.4 22.6 23 20.6Q25.6 19 26.4 15.4Q27.6 21 24.6 26Q20.6 31.4 13.4 30.6Q5.4 29.4 2 21.4Q0 14.6 3.4 5.6Z" fill="url(#ffo)"/>
<path d="M4 22Q8 29 16 29.6Q23 29.4 26 23" fill="none" stroke="#f8a038" stroke-width="1.2" opacity=".6"/>
</svg>
<svg class="i" style="left:444px;top:988px" width="34" height="34" viewBox="0 0 34 34" >
<defs><linearGradient id="abg" x1="0" y1="0" x2="1" y2="1"><stop offset="0" stop-color="#d8f0fc"/><stop offset="0.45" stop-color="#58b8e8"/><stop offset="1" stop-color="#1470c0"/></linearGradient></defs>
<rect x="1.2" y="6.2" width="24.6" height="25.6" rx="3.6" fill="#fff" stroke="#1c68b4" stroke-width="1.4"/>
<rect x="3.6" y="8.6" width="19.8" height="20.8" rx="2" fill="url(#abg)" stroke="#1c68b4" stroke-width="1"/>
<path d="M9.4 19.2L22.6 2H28V16.6H31.6V21.4H28V25.4H22.4V21.4H9.4Z" fill="#fff" stroke="#fff" stroke-width="2.2" stroke-linejoin="round"/>
<path d="M9.4 19.2L22.6 2H28V16.6H31.6V21.4H28V25.4H22.4V21.4H9.4Z M22.4 16.6V7.4L15 16.6Z" fill="#18a4e0" fill-rule="evenodd"/>
<path d="M18.4 16.6L22.4 11.4V16.6Z" fill="#0c4c94"/>
</svg>
<span id="t60" class="t" style="left:448.4px;top:1012px;font-size:8px;line-height:8px;color:#fff;font-weight:bold;font-family:"Liberation Mono",monospace;letter-spacing:1.2px;">ABC</span>
<svg class="i" style="left:508px;top:990px" width="30" height="30" viewBox="0 0 30 30" >
<defs><linearGradient id="dg" x1="0" y1="0" x2="1" y2="1"><stop offset="0" stop-color="#3a3a3a"/><stop offset="0.5" stop-color="#202020"/><stop offset="1" stop-color="#141414"/></linearGradient>
<linearGradient id="dm" x1="0" y1="0" x2="1" y2="0"><stop offset="0" stop-color="#fafafa"/><stop offset="0.35" stop-color="#9c9c9c"/><stop offset="0.7" stop-color="#e8e8e8"/><stop offset="1" stop-color="#b0b0b0"/></linearGradient></defs>
<rect x="0" y="3" width="30" height="26.4" fill="url(#dg)"/>
<rect x="0" y="21" width="30" height="8.4" fill="#3a3a3a"/>
<rect x="20" y="3" width="10" height="18" fill="#6c6c6c"/>
<path d="M21 4.5h2v2h-2zM25 4h2v2h-2zM23 7.5h2v2h-2zM27 8h2v2h-2zM21 11h2v2h-2zM25 12h2v2h-2zM23 15h2v2h-2zM27 16h2v2h-2zM27 4h2v1h-2z" fill="#c8c8c8"/>
<path d="M22 6.5h1v1h-1zM26 6h1v1h-1zM24 10h1v1h-1zM22 14h1v1h-1zM26 14.6h1v1h-1zM24 18h1v1h-1zM28 12h1v1h-1z" fill="#303030"/>
<path d="M3 1L11 0Q22 1.4 21.6 11.6Q21 20.4 12 22.8L5.6 24.4L3.4 20Z" fill="url(#dm)"/>
<path d="M9.6 5.6Q15.6 6 15.6 11.6Q15.4 16.4 10.6 17.8L9.6 12Z" fill="#484848"/>
<path d="M3 1L5.4 13L3.4 20L5.6 24.4L8.2 22L7.2 12L8.6 2.4Z" fill="#f4f4f4"/>
</svg>
<span id="t61" class="t" style="left:1114.0px;top:994px;font-size:12px;line-height:16px;color:#f4f6fa;letter-spacing:-0.717px;">RU</span>
<svg class="i" style="left:1145px;top:1002px" width="10" height="7" viewBox="0 0 10 7" ><path d="M0.4 6.2L4.7 1.6L9 6.2Z" fill="#4c5c74"/><path d="M0.2 5.4L4.7 0.4L9.2 5.4Z" fill="#fff"/></svg>
<svg class="i" style="left:1166px;top:997px" width="16" height="16" viewBox="0 0 16 16" >
<g fill="#44d010" stroke="#1c8008" stroke-width="0.6"><circle cx="7.2" cy="2.7" r="2.5"/><circle cx="10.6" cy="4.3" r="2.5"/><circle cx="11.4" cy="8.0" r="2.5"/><circle cx="9.1" cy="10.9" r="2.5"/><circle cx="5.3" cy="10.9" r="2.5"/><circle cx="3.0" cy="8.0" r="2.5"/><circle cx="3.8" cy="4.3" r="2.5"/></g><circle cx="7.2" cy="7" r="2.6" fill="#58e020"/>
<circle cx="10.3" cy="10.3" r="4.8" fill="#ee1c1c" stroke="#fff" stroke-width="1"/>
<path d="M8.1 8.1L12.5 12.5M12.5 8.1L8.1 12.5" stroke="#fff" stroke-width="1.6"/>
</svg>
<span id="t62" class="t" style="left:1213.0px;top:989px;font-size:12px;line-height:16px;color:#fff;letter-spacing:-0.427px;">10:26</span>
<span id="t63" class="t" style="left:1199.4px;top:1006px;font-size:12px;line-height:16px;color:#fff;letter-spacing:-0.567px;">06.05.2015</span>
<div style="left:1265px;top:986px;width:1px;height:38px;background:#56647a;"></div>
<div style="left:1266px;top:986px;width:13px;height:37px;border:1px solid #b2becf;background:linear-gradient(#95a2b5 0,#808ea3 18%,#5b697d 42%,#5d6b80 70%,#7b8aa1 100%);"></div>
<div style="left:1279px;top:986px;width:1px;height:38px;background:#6a788e;"></div>
<svg class="i" style="left:0;top:0" width="1280" height="1024" viewBox="0 0 1280 1024" fill="none" stroke="#ed1c24" stroke-linecap="round" stroke-linejoin="round"><path d="M476.8 64.7C475.3 65.1 470.7 66.3 468.0 67.2C465.3 68.1 463.1 68.8 460.6 70.0C458.1 71.2 455.3 73.0 453.0 74.5C450.7 76.0 450.0 76.7 446.6 79.2C443.2 81.7 437.2 86.6 432.5 89.8C427.8 92.9 423.1 95.2 418.4 98.2C413.7 101.2 409.1 104.5 404.4 108.0C399.7 111.5 395.0 115.3 390.3 119.3C385.6 123.3 381.0 128.2 376.3 132.0C371.6 135.8 366.9 139.0 362.2 141.8C357.5 144.6 352.7 146.7 348.1 148.8C343.5 150.9 337.0 153.5 334.8 154.4" stroke-width="3.8"/><path d="M334.8 154.4C337.0 153.0 344.1 149.3 348.0 146.0C351.9 142.7 354.8 137.5 358.0 134.8C361.2 132.1 365.5 130.6 367.0 129.8" stroke-width="3.4"/><path d="M334.8 154.4C338.2 152.8 348.6 147.4 355.0 144.6C361.4 141.8 367.6 139.3 373.4 137.6C379.2 135.9 386.9 135.0 389.6 134.5" stroke-width="3.2"/><path d="M241.6 175.6C236.4 175.8 233.2 175.6 229.0 176.4C224.8 177.2 220.2 178.4 216.6 180.3C213.0 182.2 209.8 185.2 207.2 188.1C204.6 191.0 202.1 194.6 200.9 197.5C199.7 200.4 199.4 203.0 200.2 205.3C201.0 207.7 202.1 209.4 205.6 211.6C209.1 213.8 215.3 216.5 221.3 218.6C227.3 220.7 235.1 222.4 241.6 224.0C248.1 225.6 253.3 226.7 260.3 228.0C267.3 229.3 277.2 231.2 283.8 231.9C290.3 232.6 294.2 232.5 299.4 232.2C304.6 231.9 309.8 231.4 315.0 230.3C320.2 229.2 325.4 227.4 330.6 225.6C335.8 223.8 341.0 222.0 346.2 219.4C351.5 216.8 357.7 213.4 361.9 210.0C366.1 206.6 369.2 202.4 371.2 199.0C373.3 195.6 374.3 192.3 374.4 189.7C374.5 187.1 374.1 185.3 372.0 183.4C369.9 181.5 365.7 179.3 361.9 178.0C358.1 176.7 352.7 175.9 349.4 175.6C346.1 175.3 345.1 176.1 342.0 176.4C338.9 176.8 335.1 177.3 330.6 177.7C326.1 178.1 318.9 178.8 315.0 178.8C311.1 178.8 309.5 178.1 307.0 177.7C304.5 177.3 303.9 176.5 300.0 176.2C296.1 175.8 290.4 175.7 283.8 175.6C277.1 175.5 267.3 175.4 260.3 175.4C253.3 175.4 246.8 175.4 241.6 175.6Z" stroke-width="3.5"/><circle cx="516" cy="786" r="1.3" fill="#ed1c24" stroke="none"/></svg>
</div>
</body></html>
